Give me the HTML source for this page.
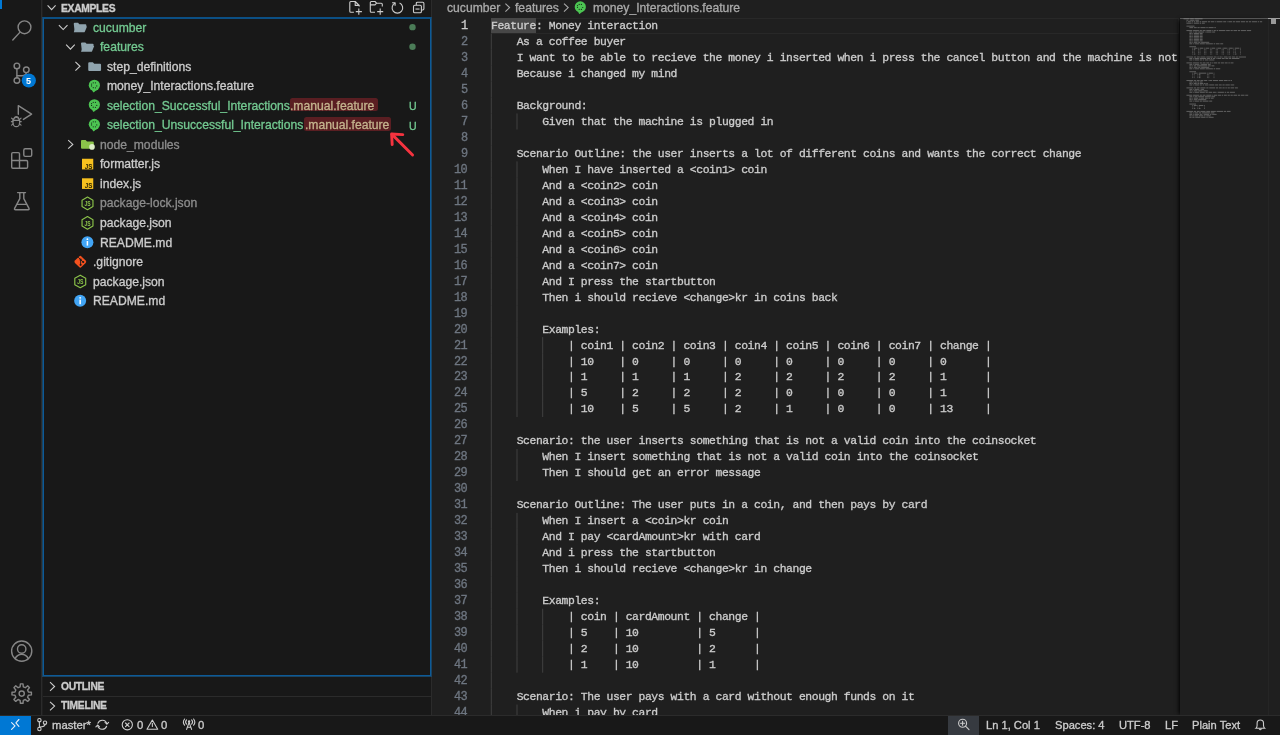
<!DOCTYPE html>
<html><head><meta charset="utf-8"><style>
html,body{margin:0;padding:0;width:1280px;height:735px;overflow:hidden;background:#1f1f1f;}
.t{position:absolute;white-space:pre;line-height:normal;-webkit-text-stroke:0.32px currentColor;will-change:transform;}
.r{position:absolute;}
.s{position:absolute;overflow:visible;}
</style></head><body>
<div class="r" style="left:0.00px;top:0.00px;width:1280.00px;height:735.00px;background:#1f1f1f;"></div><div class="r" style="left:0.00px;top:0.00px;width:42.00px;height:716.00px;background:#181818;"></div><div class="r" style="left:41.00px;top:0.00px;width:1.00px;height:716.00px;background:#2b2b2b;"></div><div class="r" style="left:43.00px;top:0.00px;width:389.00px;height:716.00px;background:#181818;"></div><div class="r" style="left:431.00px;top:0.00px;width:1.00px;height:716.00px;background:#2b2b2b;"></div><div class="r" style="left:0.00px;top:0.00px;width:2.00px;height:9.30px;background:#0078d4;"></div><svg class="s" style="left:0.00px;top:0.00px" width="42" height="716" viewBox="0 0 42 716">
<g fill="none" stroke="#868686" stroke-width="1.4" stroke-linecap="round" stroke-linejoin="round">
 <circle cx="24.5" cy="27.3" r="6.4"/>
 <line x1="19.6" y1="32.6" x2="12.8" y2="40.0"/>
 <circle cx="16.9" cy="65.9" r="2.8"/>
 <circle cx="26.3" cy="69.8" r="2.8"/>
 <circle cx="16.9" cy="80.5" r="2.8"/>
 <line x1="16.9" y1="68.7" x2="16.9" y2="77.7"/>
 <path d="M26.3 72.6 Q26.1 75.7 22.2 75.7 L17.2 75.7"/>
 <path d="M18.3 114.2 L18.3 105.6 L31.6 114.1 L23.4 119.4"/>
 <g transform="translate(16.3 121.1) scale(0.86) translate(-16.3 -121.1)">
 <path d="M12.4 121.5 A3.9 4.6 0 0 1 20.2 121.5 L20.2 123 A3.9 4.6 0 0 1 12.4 123 Z"/>
 <path d="M13.6 118.6 A2.7 2.7 0 0 1 19 118.6"/>
 <line x1="12.4" y1="120.2" x2="20.2" y2="120.2"/>
 <line x1="10.8" y1="117.6" x2="12.7" y2="119.3"/>
 <line x1="21.8" y1="117.6" x2="19.9" y2="119.3"/>
 <line x1="10.6" y1="121.8" x2="12.4" y2="121.8"/>
 <line x1="22" y1="121.8" x2="20.2" y2="121.8"/>
 <line x1="10.8" y1="125.8" x2="12.8" y2="124.3"/>
 <line x1="21.8" y1="125.8" x2="19.8" y2="124.3"/>
 </g>
 <path d="M13.2 152.6 H18.3 Q19.5 152.6 19.5 153.8 V160.5 H26.4 Q27.6 160.5 27.6 161.7 V167.1 Q27.6 168.3 26.4 168.3 H12.9 Q11.7 168.3 11.7 167.1 V153.8 Q11.7 152.6 12.9 152.6 Z"/>
 <line x1="11.7" y1="160.5" x2="19.5" y2="160.5"/>
 <line x1="19.5" y1="160.5" x2="19.5" y2="168.3"/>
 <rect x="23.8" y="148.8" width="7.9" height="7.6" rx="1.4"/>
 <line x1="17.6" y1="192.6" x2="25.5" y2="192.6"/>
 <path d="M19.8 192.6 V198.6 L14.6 208.4 Q14.1 209.7 15.5 209.7 H28.1 Q29.5 209.7 29 208.4 L23.8 198.6 V192.6"/>
 <line x1="17.4" y1="204.4" x2="26.2" y2="204.4"/>
 <circle cx="21.7" cy="651.1" r="10.1"/>
 <circle cx="21.7" cy="649.0" r="4.2"/>
 <path d="M15.0 658.6 Q17.6 654.3 21.7 654.3 Q25.8 654.3 28.4 658.6"/>
</g>
<circle cx="28.8" cy="80.5" r="7.1" fill="#0078d4"/>
<polygon points="20.09,686.89 20.40,683.89 23.00,683.89 23.31,686.89 25.31,687.72 27.65,685.81 29.49,687.65 27.58,689.99 28.41,691.99 31.41,692.30 31.41,694.90 28.41,695.21 27.58,697.21 29.49,699.55 27.65,701.39 25.31,699.48 23.31,700.31 23.00,703.31 20.40,703.31 20.09,700.31 18.09,699.48 15.75,701.39 13.91,699.55 15.82,697.21 14.99,695.21 11.99,694.90 11.99,692.30 14.99,691.99 15.82,689.99 13.91,687.65 15.75,685.81 18.09,687.72" fill="none" stroke="#868686" stroke-width="1.4" stroke-linecap="round" stroke-linejoin="round"/><circle cx="21.7" cy="693.6" r="2.6" fill="none" stroke="#868686" stroke-width="1.4" stroke-linecap="round" stroke-linejoin="round"/></svg><div class="t" style="left:26.30px;top:75.90px;font-family:'Liberation Sans',sans-serif;font-size:9.0px;color:#ffffff;font-weight:bold;-webkit-text-stroke:0;">5</div><svg class="s" style="left:44.00px;top:0.00px" width="16" height="18" viewBox="0 0 16 18"><path d="M3.6 5.4 L7.6 9.6 L11.6 5.4" fill="none" stroke="#cccccc" stroke-width="1.1"/></svg><div class="t" style="left:60.80px;top:2.60px;font-family:'Liberation Sans',sans-serif;font-size:10.3px;color:#cccccc;font-weight:bold;letter-spacing:-0.3px">EXAMPLES</div><svg class="s" style="left:0.00px;top:0.00px" width="432" height="18" viewBox="0 0 432 18"><g fill="none" stroke="#cccccc" stroke-width="1.1" stroke-linejoin="round">
 <path d="M353.9 12.3 H350.8 Q349.8 12.3 349.8 11.3 V2.5 Q349.8 1.5 350.8 1.5 H355.2 L359.2 5.5 V6.6 M355.2 1.8 V5.4 H359"/>
 <path d="M358.8 8.6 V14.7 M355.8 11.6 H361.9"/>
 <path d="M375 12.3 H371.3 Q370.3 12.3 370.3 11.3 V2.5 Q370.3 1.5 371.3 1.5 H375 L376.6 3.2 H381.3 Q382.3 3.2 382.3 4.2 V6.6 M370.3 4.9 H375 L376.6 3.2"/>
 <path d="M380.2 8.6 V14.7 M377.2 11.6 H383.2"/>
 <path d="M399.56 2.96 A5.3 5.3 0 1 1 395.24 2.96"/>
 <path d="M392.1 2.7 L395.1 2.7 L395.1 5.7"/>
 <rect x="413.5" y="5.2" width="7.9" height="7.6" rx="1.3"/>
 <path d="M416.3 5.2 V3.4 Q416.3 2.2 417.5 2.2 H422.7 Q423.9 2.2 423.9 3.4 V8.8 Q423.9 10 422.7 10 H421.4"/>
 <line x1="415.5" y1="9.05" x2="419.5" y2="9.05"/>
</g></svg><div class="r" style="left:42px;top:17px;width:390px;height:660px;border:1px solid #1b4462;border-top-color:#0b4f84;box-sizing:border-box"></div><div class="r" style="left:43px;top:18px;width:388px;height:658px;border:1px solid #0c5a98;border-top-color:#0b4f84;box-sizing:border-box"></div><div class="t" style="left:92.75px;top:20.60px;font-family:'Liberation Sans',sans-serif;font-size:12.15px;color:#73c991;font-weight:normal;">cucumber</div><div class="t" style="left:100.00px;top:40.14px;font-family:'Liberation Sans',sans-serif;font-size:12.15px;color:#73c991;font-weight:normal;">features</div><div class="t" style="left:107.25px;top:59.68px;font-family:'Liberation Sans',sans-serif;font-size:12.15px;color:#cccccc;font-weight:normal;">step_definitions</div><div class="t" style="left:107.25px;top:79.22px;font-family:'Liberation Sans',sans-serif;font-size:12.15px;color:#cccccc;font-weight:normal;">money_Interactions.feature</div><div class="t" style="left:107.25px;top:98.76px;font-family:'Liberation Sans',sans-serif;font-size:12.15px;color:#73c991;font-weight:normal;">selection_Successful_Interactions</div><div class="r" style="left:290.00px;top:97.86px;width:88.10px;height:13.40px;background:#5a1e22;border-radius:2.5px"></div><div class="t" style="left:290.20px;top:98.76px;font-family:'Liberation Sans',sans-serif;font-size:12.15px;color:#c4b48e;font-weight:normal;">.manual.feature</div><div class="t" style="left:409.30px;top:99.96px;font-family:'Liberation Sans',sans-serif;font-size:10.6px;color:#73c991;font-weight:normal;">U</div><div class="t" style="left:107.25px;top:118.30px;font-family:'Liberation Sans',sans-serif;font-size:12.15px;color:#73c991;font-weight:normal;">selection_Unsuccessful_Interactions</div><div class="r" style="left:304.40px;top:117.40px;width:86.85px;height:13.40px;background:#5a1e22;border-radius:2.5px"></div><div class="t" style="left:304.60px;top:118.30px;font-family:'Liberation Sans',sans-serif;font-size:12.15px;color:#c4b48e;font-weight:normal;">.manual.feature</div><div class="t" style="left:409.30px;top:119.50px;font-family:'Liberation Sans',sans-serif;font-size:10.6px;color:#73c991;font-weight:normal;">U</div><div class="t" style="left:100.00px;top:137.84px;font-family:'Liberation Sans',sans-serif;font-size:12.15px;color:#8c8c8c;font-weight:normal;">node_modules</div><div class="t" style="left:100.00px;top:157.38px;font-family:'Liberation Sans',sans-serif;font-size:12.15px;color:#cccccc;font-weight:normal;">formatter.js</div><div class="t" style="left:100.00px;top:176.92px;font-family:'Liberation Sans',sans-serif;font-size:12.15px;color:#cccccc;font-weight:normal;">index.js</div><div class="t" style="left:100.00px;top:196.46px;font-family:'Liberation Sans',sans-serif;font-size:12.15px;color:#8c8c8c;font-weight:normal;">package-lock.json</div><div class="t" style="left:100.00px;top:216.00px;font-family:'Liberation Sans',sans-serif;font-size:12.15px;color:#cccccc;font-weight:normal;">package.json</div><div class="t" style="left:100.00px;top:235.54px;font-family:'Liberation Sans',sans-serif;font-size:12.15px;color:#cccccc;font-weight:normal;">README.md</div><div class="t" style="left:92.75px;top:255.08px;font-family:'Liberation Sans',sans-serif;font-size:12.15px;color:#cccccc;font-weight:normal;">.gitignore</div><div class="t" style="left:92.75px;top:274.62px;font-family:'Liberation Sans',sans-serif;font-size:12.15px;color:#cccccc;font-weight:normal;">package.json</div><div class="t" style="left:92.75px;top:294.16px;font-family:'Liberation Sans',sans-serif;font-size:12.15px;color:#cccccc;font-weight:normal;">README.md</div><svg class="s" style="left:0.00px;top:0.00px" width="432" height="716" viewBox="0 0 432 716"><path d="M58.90 25.07 l4.3 4.5 l4.3 -4.5" fill="none" stroke="#cccccc" stroke-width="1.1"/><path d="M73.75 23.869999999999997 q0 -1 1 -1 h3.3 l1.3 1.3 h6 q1 0 1 1 v1.9 h-9.9 l-1.7 5.4 z" fill="#90a4ae"/>
<path d="M76.05 26.569999999999997 h10.9 l-2.1 5.1 q-0.3 0.6 -1 0.6 h-10.1 z" fill="#90a4ae"/><circle cx="412.5" cy="27.17" r="3.2" fill="#4b7c57"/><path d="M66.15 44.61 l4.3 4.5 l4.3 -4.5" fill="none" stroke="#cccccc" stroke-width="1.1"/><path d="M81.0 43.410000000000004 q0 -1 1 -1 h3.3 l1.3 1.3 h6 q1 0 1 1 v1.9 h-9.9 l-1.7 5.4 z" fill="#90a4ae"/>
<path d="M83.3 46.11000000000001 h10.9 l-2.1 5.1 q-0.3 0.6 -1 0.6 h-10.1 z" fill="#90a4ae"/><circle cx="412.5" cy="46.71" r="3.2" fill="#4b7c57"/><path d="M75.40 61.95 l4.6 4.3 l-4.6 4.3" fill="none" stroke="#cccccc" stroke-width="1.1"/><path d="M88.25 63.14999999999999 q0 -1 1 -1 h3.6 l1.4 1.5 h5.8 q1 0 1 1 v5.3 q0 1 -1 1 h-10.8 q-1 0 -1 -1 z" fill="#90a4ae"/><circle cx="94.35" cy="85.29" r="5.6" fill="#4cc452"/><path d="M91.75 89.49000000000001 L93.14999999999999 92.19000000000001 Q93.75 92.49000000000001 94.55 91.69000000000001 L96.14999999999999 90.19000000000001 Z" fill="#4cc452"/><circle cx="93.25" cy="82.79" r="0.62" fill="#17301a"/><circle cx="95.45" cy="82.79" r="0.62" fill="#17301a"/><circle cx="91.55" cy="84.04" r="0.62" fill="#17301a"/><circle cx="91.55" cy="85.89" r="0.62" fill="#17301a"/><circle cx="93.25" cy="87.69" r="0.62" fill="#17301a"/><circle cx="95.45" cy="87.79" r="0.62" fill="#17301a"/><circle cx="96.75" cy="85.89" r="0.62" fill="#17301a"/><circle cx="94.35" cy="104.83" r="5.6" fill="#4cc452"/><path d="M91.75 109.03 L93.14999999999999 111.73 Q93.75 112.03 94.55 111.23 L96.14999999999999 109.73 Z" fill="#4cc452"/><circle cx="93.25" cy="102.33" r="0.62" fill="#17301a"/><circle cx="95.45" cy="102.33" r="0.62" fill="#17301a"/><circle cx="91.55" cy="103.58" r="0.62" fill="#17301a"/><circle cx="91.55" cy="105.43" r="0.62" fill="#17301a"/><circle cx="93.25" cy="107.23" r="0.62" fill="#17301a"/><circle cx="95.45" cy="107.33" r="0.62" fill="#17301a"/><circle cx="96.75" cy="105.43" r="0.62" fill="#17301a"/><circle cx="94.35" cy="124.36999999999999" r="5.6" fill="#4cc452"/><path d="M91.75 128.57 L93.14999999999999 131.26999999999998 Q93.75 131.57 94.55 130.76999999999998 L96.14999999999999 129.26999999999998 Z" fill="#4cc452"/><circle cx="93.25" cy="121.87" r="0.62" fill="#17301a"/><circle cx="95.45" cy="121.87" r="0.62" fill="#17301a"/><circle cx="91.55" cy="123.12" r="0.62" fill="#17301a"/><circle cx="91.55" cy="124.97" r="0.62" fill="#17301a"/><circle cx="93.25" cy="126.77" r="0.62" fill="#17301a"/><circle cx="95.45" cy="126.87" r="0.62" fill="#17301a"/><circle cx="96.75" cy="124.97" r="0.62" fill="#17301a"/><path d="M68.20 140.11 l4.6 4.3 l-4.6 4.3" fill="none" stroke="#cccccc" stroke-width="1.1"/><path d="M81.0 140.91000000000003 q0 -1 1 -1 h3.6 l1.4 1.5 h5.8 q1 0 1 1 v5.3 q0 1 -1 1 h-10.8 q-1 0 -1 -1 z" fill="#8bc34a"/><circle cx="92.0" cy="146.91000000000003" r="2.8" fill="#dcedc8"/><rect x="82.0" y="158.75" width="11.25" height="10.65" fill="#f7c11f"/><text x="84.7" y="168.75" textLength="7.6" lengthAdjust="spacingAndGlyphs" font-family="Liberation Sans" font-weight="bold" font-size="7.4" fill="#2a2300">JS</text><rect x="82.0" y="178.29" width="11.25" height="10.65" fill="#f7c11f"/><text x="84.7" y="188.29" textLength="7.6" lengthAdjust="spacingAndGlyphs" font-family="Liberation Sans" font-weight="bold" font-size="7.4" fill="#2a2300">JS</text><polygon points="87.50,197.03 92.96,200.18 92.96,206.48 87.50,209.63 82.04,206.48 82.04,200.18" fill="none" stroke="#8bc34a" stroke-width="1.15" stroke-linejoin="round"/><text x="84.4" y="206.23" textLength="6.2" lengthAdjust="spacingAndGlyphs" font-family="Liberation Sans" font-weight="bold" font-size="7.2" fill="#8bc34a">JS</text><polygon points="87.50,216.57 92.96,219.72 92.96,226.02 87.50,229.17 82.04,226.02 82.04,219.72" fill="none" stroke="#8bc34a" stroke-width="1.15" stroke-linejoin="round"/><text x="84.4" y="225.76999999999998" textLength="6.2" lengthAdjust="spacingAndGlyphs" font-family="Liberation Sans" font-weight="bold" font-size="7.2" fill="#8bc34a">JS</text><circle cx="87.4" cy="242.21" r="6" fill="#42a5f5"/><rect x="86.65" y="241.01000000000002" width="1.5" height="4.6" fill="#ffffff"/><circle cx="87.4" cy="239.21" r="0.9" fill="#ffffff"/><rect x="75.7" y="257.15" width="9.2" height="9.2" rx="1.6" transform="rotate(45 80.3 261.75)" fill="#f4511e"/><path d="M78.2 257.15 L80.6 259.65 V264.85 M80.6 259.65 L83.2 262.05" stroke="#1b1b1b" stroke-width="0.9" fill="none"/><circle cx="80.6" cy="259.65" r="1.05" fill="#1b1b1b"/><circle cx="80.6" cy="264.85" r="1.05" fill="#1b1b1b"/><circle cx="83.2" cy="262.05" r="1.05" fill="#1b1b1b"/><polygon points="80.25,275.19 85.71,278.34 85.71,284.64 80.25,287.79 74.79,284.64 74.79,278.34" fill="none" stroke="#8bc34a" stroke-width="1.15" stroke-linejoin="round"/><text x="77.15" y="284.38999999999993" textLength="6.2" lengthAdjust="spacingAndGlyphs" font-family="Liberation Sans" font-weight="bold" font-size="7.2" fill="#8bc34a">JS</text><circle cx="80.15" cy="300.83" r="6" fill="#42a5f5"/><rect x="79.4" y="299.63" width="1.5" height="4.6" fill="#ffffff"/><circle cx="80.15" cy="297.83" r="0.9" fill="#ffffff"/></svg><svg class="s" style="left:380.00px;top:125.80px" width="40" height="35" viewBox="0 0 40 35"><g stroke="#f5333f" stroke-width="2.9" fill="none" stroke-linecap="round" stroke-linejoin="round"><path d="M32.6 29 L12.0 8.4"/><path d="M22.8 8.6 L11.6 8.0 L12.2 18.6"/></g></svg><div class="r" style="left:43.00px;top:695.90px;width:388.70px;height:0.90px;background:#2b2b2b;"></div><svg class="s" style="left:44.00px;top:676.00px" width="20" height="40" viewBox="0 0 20 40"><path d="M6.00 6.20 l4.6 4.3 l-4.6 4.3" fill="none" stroke="#cccccc" stroke-width="1.1"/><path d="M6.00 25.80 l4.6 4.3 l-4.6 4.3" fill="none" stroke="#cccccc" stroke-width="1.1"/></svg><div class="t" style="left:61.00px;top:680.60px;font-family:'Liberation Sans',sans-serif;font-size:10.3px;color:#cccccc;font-weight:bold;letter-spacing:-0.3px">OUTLINE</div><div class="t" style="left:61.00px;top:700.10px;font-family:'Liberation Sans',sans-serif;font-size:10.3px;color:#cccccc;font-weight:bold;letter-spacing:-0.3px">TIMELINE</div><div class="r" style="left:490.65px;top:17.60px;width:688.85px;height:15.98px;border:1.4px solid #282828;box-sizing:border-box"></div><div class="r" style="left:491.25px;top:18.10px;width:44.94px;height:14.98px;background:#474747;"></div><svg class="s" style="left:0.00px;top:0.00px" width="1180" height="716" viewBox="0 0 1180 716"><rect x="490.80" y="33.58" width="1" height="16.03" fill="#404040"/><rect x="490.80" y="49.55" width="1" height="16.03" fill="#404040"/><rect x="490.80" y="65.53" width="1" height="16.03" fill="#404040"/><rect x="490.80" y="81.50" width="1" height="16.03" fill="#404040"/><rect x="490.80" y="97.48" width="1" height="16.03" fill="#404040"/><rect x="490.80" y="113.46" width="1" height="16.03" fill="#404040"/><rect x="516.48" y="113.46" width="1" height="16.03" fill="#404040"/><rect x="490.80" y="129.43" width="1" height="16.03" fill="#404040"/><rect x="490.80" y="145.41" width="1" height="16.03" fill="#404040"/><rect x="490.80" y="161.38" width="1" height="16.03" fill="#404040"/><rect x="516.48" y="161.38" width="1" height="16.03" fill="#404040"/><rect x="490.80" y="177.36" width="1" height="16.03" fill="#404040"/><rect x="516.48" y="177.36" width="1" height="16.03" fill="#404040"/><rect x="490.80" y="193.34" width="1" height="16.03" fill="#404040"/><rect x="516.48" y="193.34" width="1" height="16.03" fill="#404040"/><rect x="490.80" y="209.31" width="1" height="16.03" fill="#404040"/><rect x="516.48" y="209.31" width="1" height="16.03" fill="#404040"/><rect x="490.80" y="225.29" width="1" height="16.03" fill="#404040"/><rect x="516.48" y="225.29" width="1" height="16.03" fill="#404040"/><rect x="490.80" y="241.26" width="1" height="16.03" fill="#404040"/><rect x="516.48" y="241.26" width="1" height="16.03" fill="#404040"/><rect x="490.80" y="257.24" width="1" height="16.03" fill="#404040"/><rect x="516.48" y="257.24" width="1" height="16.03" fill="#404040"/><rect x="490.80" y="273.22" width="1" height="16.03" fill="#404040"/><rect x="516.48" y="273.22" width="1" height="16.03" fill="#404040"/><rect x="490.80" y="289.19" width="1" height="16.03" fill="#404040"/><rect x="516.48" y="289.19" width="1" height="16.03" fill="#404040"/><rect x="490.80" y="305.17" width="1" height="16.03" fill="#404040"/><rect x="516.48" y="305.17" width="1" height="16.03" fill="#404040"/><rect x="490.80" y="321.14" width="1" height="16.03" fill="#404040"/><rect x="516.48" y="321.14" width="1" height="16.03" fill="#404040"/><rect x="490.80" y="337.12" width="1" height="16.03" fill="#404040"/><rect x="516.48" y="337.12" width="1" height="16.03" fill="#404040"/><rect x="542.16" y="337.12" width="1" height="16.03" fill="#404040"/><rect x="490.80" y="353.10" width="1" height="16.03" fill="#404040"/><rect x="516.48" y="353.10" width="1" height="16.03" fill="#404040"/><rect x="542.16" y="353.10" width="1" height="16.03" fill="#404040"/><rect x="490.80" y="369.07" width="1" height="16.03" fill="#404040"/><rect x="516.48" y="369.07" width="1" height="16.03" fill="#404040"/><rect x="542.16" y="369.07" width="1" height="16.03" fill="#404040"/><rect x="490.80" y="385.05" width="1" height="16.03" fill="#404040"/><rect x="516.48" y="385.05" width="1" height="16.03" fill="#404040"/><rect x="542.16" y="385.05" width="1" height="16.03" fill="#404040"/><rect x="490.80" y="401.02" width="1" height="16.03" fill="#404040"/><rect x="516.48" y="401.02" width="1" height="16.03" fill="#404040"/><rect x="542.16" y="401.02" width="1" height="16.03" fill="#404040"/><rect x="490.80" y="417.00" width="1" height="16.03" fill="#404040"/><rect x="490.80" y="432.98" width="1" height="16.03" fill="#404040"/><rect x="490.80" y="448.95" width="1" height="16.03" fill="#404040"/><rect x="516.48" y="448.95" width="1" height="16.03" fill="#404040"/><rect x="490.80" y="464.93" width="1" height="16.03" fill="#404040"/><rect x="516.48" y="464.93" width="1" height="16.03" fill="#404040"/><rect x="490.80" y="480.90" width="1" height="16.03" fill="#404040"/><rect x="490.80" y="496.88" width="1" height="16.03" fill="#404040"/><rect x="490.80" y="512.86" width="1" height="16.03" fill="#404040"/><rect x="516.48" y="512.86" width="1" height="16.03" fill="#404040"/><rect x="490.80" y="528.83" width="1" height="16.03" fill="#404040"/><rect x="516.48" y="528.83" width="1" height="16.03" fill="#404040"/><rect x="490.80" y="544.81" width="1" height="16.03" fill="#404040"/><rect x="516.48" y="544.81" width="1" height="16.03" fill="#404040"/><rect x="490.80" y="560.78" width="1" height="16.03" fill="#404040"/><rect x="516.48" y="560.78" width="1" height="16.03" fill="#404040"/><rect x="490.80" y="576.76" width="1" height="16.03" fill="#404040"/><rect x="516.48" y="576.76" width="1" height="16.03" fill="#404040"/><rect x="490.80" y="592.74" width="1" height="16.03" fill="#404040"/><rect x="516.48" y="592.74" width="1" height="16.03" fill="#404040"/><rect x="490.80" y="608.71" width="1" height="16.03" fill="#404040"/><rect x="516.48" y="608.71" width="1" height="16.03" fill="#404040"/><rect x="542.16" y="608.71" width="1" height="16.03" fill="#404040"/><rect x="490.80" y="624.69" width="1" height="16.03" fill="#404040"/><rect x="516.48" y="624.69" width="1" height="16.03" fill="#404040"/><rect x="542.16" y="624.69" width="1" height="16.03" fill="#404040"/><rect x="490.80" y="640.66" width="1" height="16.03" fill="#404040"/><rect x="516.48" y="640.66" width="1" height="16.03" fill="#404040"/><rect x="542.16" y="640.66" width="1" height="16.03" fill="#404040"/><rect x="490.80" y="656.64" width="1" height="16.03" fill="#404040"/><rect x="516.48" y="656.64" width="1" height="16.03" fill="#404040"/><rect x="542.16" y="656.64" width="1" height="16.03" fill="#404040"/><rect x="490.80" y="672.62" width="1" height="16.03" fill="#404040"/><rect x="490.80" y="688.59" width="1" height="16.03" fill="#404040"/><rect x="490.80" y="704.57" width="1" height="16.03" fill="#404040"/><rect x="516.48" y="704.57" width="1" height="16.03" fill="#404040"/></svg><div class="t" style="left:460.78px;top:19.00px;font-family:'Liberation Mono',monospace;font-size:11.9px;color:#cccccc;font-weight:normal;letter-spacing:-0.721px;">1</div><div class="t" style="left:491.25px;top:20.00px;font-family:'Liberation Mono',monospace;font-size:11.4px;color:#cccccc;font-weight:normal;letter-spacing:-0.421px;">Feature: Money interaction</div><div class="t" style="left:460.78px;top:34.98px;font-family:'Liberation Mono',monospace;font-size:11.9px;color:#6e7681;font-weight:normal;letter-spacing:-0.721px;">2</div><div class="t" style="left:491.25px;top:35.98px;font-family:'Liberation Mono',monospace;font-size:11.4px;color:#cccccc;font-weight:normal;letter-spacing:-0.421px;">    As a coffee buyer</div><div class="t" style="left:460.78px;top:50.95px;font-family:'Liberation Mono',monospace;font-size:11.9px;color:#6e7681;font-weight:normal;letter-spacing:-0.721px;">3</div><div class="t" style="left:491.25px;top:51.95px;font-family:'Liberation Mono',monospace;font-size:11.4px;color:#cccccc;font-weight:normal;letter-spacing:-0.421px;">    I want to be able to recieve the money i inserted when i press the cancel button and the machine is not</div><div class="t" style="left:460.78px;top:66.93px;font-family:'Liberation Mono',monospace;font-size:11.9px;color:#6e7681;font-weight:normal;letter-spacing:-0.721px;">4</div><div class="t" style="left:491.25px;top:67.93px;font-family:'Liberation Mono',monospace;font-size:11.4px;color:#cccccc;font-weight:normal;letter-spacing:-0.421px;">    Because i changed my mind</div><div class="t" style="left:460.78px;top:82.90px;font-family:'Liberation Mono',monospace;font-size:11.9px;color:#6e7681;font-weight:normal;letter-spacing:-0.721px;">5</div><div class="t" style="left:460.78px;top:98.88px;font-family:'Liberation Mono',monospace;font-size:11.9px;color:#6e7681;font-weight:normal;letter-spacing:-0.721px;">6</div><div class="t" style="left:491.25px;top:99.88px;font-family:'Liberation Mono',monospace;font-size:11.4px;color:#cccccc;font-weight:normal;letter-spacing:-0.421px;">    Background:</div><div class="t" style="left:460.78px;top:114.86px;font-family:'Liberation Mono',monospace;font-size:11.9px;color:#6e7681;font-weight:normal;letter-spacing:-0.721px;">7</div><div class="t" style="left:491.25px;top:115.86px;font-family:'Liberation Mono',monospace;font-size:11.4px;color:#cccccc;font-weight:normal;letter-spacing:-0.421px;">        Given that the machine is plugged in</div><div class="t" style="left:460.78px;top:130.83px;font-family:'Liberation Mono',monospace;font-size:11.9px;color:#6e7681;font-weight:normal;letter-spacing:-0.721px;">8</div><div class="t" style="left:460.78px;top:146.81px;font-family:'Liberation Mono',monospace;font-size:11.9px;color:#6e7681;font-weight:normal;letter-spacing:-0.721px;">9</div><div class="t" style="left:491.25px;top:147.81px;font-family:'Liberation Mono',monospace;font-size:11.4px;color:#cccccc;font-weight:normal;letter-spacing:-0.421px;">    Scenario Outline: the user inserts a lot of different coins and wants the correct change</div><div class="t" style="left:454.36px;top:162.78px;font-family:'Liberation Mono',monospace;font-size:11.9px;color:#6e7681;font-weight:normal;letter-spacing:-0.721px;">10</div><div class="t" style="left:491.25px;top:163.78px;font-family:'Liberation Mono',monospace;font-size:11.4px;color:#cccccc;font-weight:normal;letter-spacing:-0.421px;">        When I have inserted a &lt;coin1&gt; coin</div><div class="t" style="left:454.36px;top:178.76px;font-family:'Liberation Mono',monospace;font-size:11.9px;color:#6e7681;font-weight:normal;letter-spacing:-0.721px;">11</div><div class="t" style="left:491.25px;top:179.76px;font-family:'Liberation Mono',monospace;font-size:11.4px;color:#cccccc;font-weight:normal;letter-spacing:-0.421px;">        And a &lt;coin2&gt; coin</div><div class="t" style="left:454.36px;top:194.74px;font-family:'Liberation Mono',monospace;font-size:11.9px;color:#6e7681;font-weight:normal;letter-spacing:-0.721px;">12</div><div class="t" style="left:491.25px;top:195.74px;font-family:'Liberation Mono',monospace;font-size:11.4px;color:#cccccc;font-weight:normal;letter-spacing:-0.421px;">        And a &lt;coin3&gt; coin</div><div class="t" style="left:454.36px;top:210.71px;font-family:'Liberation Mono',monospace;font-size:11.9px;color:#6e7681;font-weight:normal;letter-spacing:-0.721px;">13</div><div class="t" style="left:491.25px;top:211.71px;font-family:'Liberation Mono',monospace;font-size:11.4px;color:#cccccc;font-weight:normal;letter-spacing:-0.421px;">        And a &lt;coin4&gt; coin</div><div class="t" style="left:454.36px;top:226.69px;font-family:'Liberation Mono',monospace;font-size:11.9px;color:#6e7681;font-weight:normal;letter-spacing:-0.721px;">14</div><div class="t" style="left:491.25px;top:227.69px;font-family:'Liberation Mono',monospace;font-size:11.4px;color:#cccccc;font-weight:normal;letter-spacing:-0.421px;">        And a &lt;coin5&gt; coin</div><div class="t" style="left:454.36px;top:242.66px;font-family:'Liberation Mono',monospace;font-size:11.9px;color:#6e7681;font-weight:normal;letter-spacing:-0.721px;">15</div><div class="t" style="left:491.25px;top:243.66px;font-family:'Liberation Mono',monospace;font-size:11.4px;color:#cccccc;font-weight:normal;letter-spacing:-0.421px;">        And a &lt;coin6&gt; coin</div><div class="t" style="left:454.36px;top:258.64px;font-family:'Liberation Mono',monospace;font-size:11.9px;color:#6e7681;font-weight:normal;letter-spacing:-0.721px;">16</div><div class="t" style="left:491.25px;top:259.64px;font-family:'Liberation Mono',monospace;font-size:11.4px;color:#cccccc;font-weight:normal;letter-spacing:-0.421px;">        And a &lt;coin7&gt; coin</div><div class="t" style="left:454.36px;top:274.62px;font-family:'Liberation Mono',monospace;font-size:11.9px;color:#6e7681;font-weight:normal;letter-spacing:-0.721px;">17</div><div class="t" style="left:491.25px;top:275.62px;font-family:'Liberation Mono',monospace;font-size:11.4px;color:#cccccc;font-weight:normal;letter-spacing:-0.421px;">        And I press the startbutton</div><div class="t" style="left:454.36px;top:290.59px;font-family:'Liberation Mono',monospace;font-size:11.9px;color:#6e7681;font-weight:normal;letter-spacing:-0.721px;">18</div><div class="t" style="left:491.25px;top:291.59px;font-family:'Liberation Mono',monospace;font-size:11.4px;color:#cccccc;font-weight:normal;letter-spacing:-0.421px;">        Then i should recieve &lt;change&gt;kr in coins back</div><div class="t" style="left:454.36px;top:306.57px;font-family:'Liberation Mono',monospace;font-size:11.9px;color:#6e7681;font-weight:normal;letter-spacing:-0.721px;">19</div><div class="t" style="left:454.36px;top:322.54px;font-family:'Liberation Mono',monospace;font-size:11.9px;color:#6e7681;font-weight:normal;letter-spacing:-0.721px;">20</div><div class="t" style="left:491.25px;top:323.54px;font-family:'Liberation Mono',monospace;font-size:11.4px;color:#cccccc;font-weight:normal;letter-spacing:-0.421px;">        Examples:</div><div class="t" style="left:454.36px;top:338.52px;font-family:'Liberation Mono',monospace;font-size:11.9px;color:#6e7681;font-weight:normal;letter-spacing:-0.721px;">21</div><div class="t" style="left:491.25px;top:339.52px;font-family:'Liberation Mono',monospace;font-size:11.4px;color:#cccccc;font-weight:normal;letter-spacing:-0.421px;">            | coin1 | coin2 | coin3 | coin4 | coin5 | coin6 | coin7 | change |</div><div class="t" style="left:454.36px;top:354.50px;font-family:'Liberation Mono',monospace;font-size:11.9px;color:#6e7681;font-weight:normal;letter-spacing:-0.721px;">22</div><div class="t" style="left:491.25px;top:355.50px;font-family:'Liberation Mono',monospace;font-size:11.4px;color:#cccccc;font-weight:normal;letter-spacing:-0.421px;">            | 10    | 0     | 0     | 0     | 0     | 0     | 0     | 0      |</div><div class="t" style="left:454.36px;top:370.47px;font-family:'Liberation Mono',monospace;font-size:11.9px;color:#6e7681;font-weight:normal;letter-spacing:-0.721px;">23</div><div class="t" style="left:491.25px;top:371.47px;font-family:'Liberation Mono',monospace;font-size:11.4px;color:#cccccc;font-weight:normal;letter-spacing:-0.421px;">            | 1     | 1     | 1     | 2     | 2     | 2     | 2     | 1      |</div><div class="t" style="left:454.36px;top:386.45px;font-family:'Liberation Mono',monospace;font-size:11.9px;color:#6e7681;font-weight:normal;letter-spacing:-0.721px;">24</div><div class="t" style="left:491.25px;top:387.45px;font-family:'Liberation Mono',monospace;font-size:11.4px;color:#cccccc;font-weight:normal;letter-spacing:-0.421px;">            | 5     | 2     | 2     | 2     | 0     | 0     | 0     | 1      |</div><div class="t" style="left:454.36px;top:402.42px;font-family:'Liberation Mono',monospace;font-size:11.9px;color:#6e7681;font-weight:normal;letter-spacing:-0.721px;">25</div><div class="t" style="left:491.25px;top:403.42px;font-family:'Liberation Mono',monospace;font-size:11.4px;color:#cccccc;font-weight:normal;letter-spacing:-0.421px;">            | 10    | 5     | 5     | 2     | 1     | 0     | 0     | 13     |</div><div class="t" style="left:454.36px;top:418.40px;font-family:'Liberation Mono',monospace;font-size:11.9px;color:#6e7681;font-weight:normal;letter-spacing:-0.721px;">26</div><div class="t" style="left:454.36px;top:434.38px;font-family:'Liberation Mono',monospace;font-size:11.9px;color:#6e7681;font-weight:normal;letter-spacing:-0.721px;">27</div><div class="t" style="left:491.25px;top:435.38px;font-family:'Liberation Mono',monospace;font-size:11.4px;color:#cccccc;font-weight:normal;letter-spacing:-0.421px;">    Scenario: the user inserts something that is not a valid coin into the coinsocket</div><div class="t" style="left:454.36px;top:450.35px;font-family:'Liberation Mono',monospace;font-size:11.9px;color:#6e7681;font-weight:normal;letter-spacing:-0.721px;">28</div><div class="t" style="left:491.25px;top:451.35px;font-family:'Liberation Mono',monospace;font-size:11.4px;color:#cccccc;font-weight:normal;letter-spacing:-0.421px;">        When I insert something that is not a valid coin into the coinsocket</div><div class="t" style="left:454.36px;top:466.33px;font-family:'Liberation Mono',monospace;font-size:11.9px;color:#6e7681;font-weight:normal;letter-spacing:-0.721px;">29</div><div class="t" style="left:491.25px;top:467.33px;font-family:'Liberation Mono',monospace;font-size:11.4px;color:#cccccc;font-weight:normal;letter-spacing:-0.421px;">        Then I should get an error message</div><div class="t" style="left:454.36px;top:482.30px;font-family:'Liberation Mono',monospace;font-size:11.9px;color:#6e7681;font-weight:normal;letter-spacing:-0.721px;">30</div><div class="t" style="left:454.36px;top:498.28px;font-family:'Liberation Mono',monospace;font-size:11.9px;color:#6e7681;font-weight:normal;letter-spacing:-0.721px;">31</div><div class="t" style="left:491.25px;top:499.28px;font-family:'Liberation Mono',monospace;font-size:11.4px;color:#cccccc;font-weight:normal;letter-spacing:-0.421px;">    Scenario Outline: The user puts in a coin, and then pays by card</div><div class="t" style="left:454.36px;top:514.26px;font-family:'Liberation Mono',monospace;font-size:11.9px;color:#6e7681;font-weight:normal;letter-spacing:-0.721px;">32</div><div class="t" style="left:491.25px;top:515.26px;font-family:'Liberation Mono',monospace;font-size:11.4px;color:#cccccc;font-weight:normal;letter-spacing:-0.421px;">        When I insert a &lt;coin&gt;kr coin</div><div class="t" style="left:454.36px;top:530.23px;font-family:'Liberation Mono',monospace;font-size:11.9px;color:#6e7681;font-weight:normal;letter-spacing:-0.721px;">33</div><div class="t" style="left:491.25px;top:531.23px;font-family:'Liberation Mono',monospace;font-size:11.4px;color:#cccccc;font-weight:normal;letter-spacing:-0.421px;">        And I pay &lt;cardAmount&gt;kr with card</div><div class="t" style="left:454.36px;top:546.21px;font-family:'Liberation Mono',monospace;font-size:11.9px;color:#6e7681;font-weight:normal;letter-spacing:-0.721px;">34</div><div class="t" style="left:491.25px;top:547.21px;font-family:'Liberation Mono',monospace;font-size:11.4px;color:#cccccc;font-weight:normal;letter-spacing:-0.421px;">        And i press the startbutton</div><div class="t" style="left:454.36px;top:562.18px;font-family:'Liberation Mono',monospace;font-size:11.9px;color:#6e7681;font-weight:normal;letter-spacing:-0.721px;">35</div><div class="t" style="left:491.25px;top:563.18px;font-family:'Liberation Mono',monospace;font-size:11.4px;color:#cccccc;font-weight:normal;letter-spacing:-0.421px;">        Then i should recieve &lt;change&gt;kr in change</div><div class="t" style="left:454.36px;top:578.16px;font-family:'Liberation Mono',monospace;font-size:11.9px;color:#6e7681;font-weight:normal;letter-spacing:-0.721px;">36</div><div class="t" style="left:454.36px;top:594.14px;font-family:'Liberation Mono',monospace;font-size:11.9px;color:#6e7681;font-weight:normal;letter-spacing:-0.721px;">37</div><div class="t" style="left:491.25px;top:595.14px;font-family:'Liberation Mono',monospace;font-size:11.4px;color:#cccccc;font-weight:normal;letter-spacing:-0.421px;">        Examples:</div><div class="t" style="left:454.36px;top:610.11px;font-family:'Liberation Mono',monospace;font-size:11.9px;color:#6e7681;font-weight:normal;letter-spacing:-0.721px;">38</div><div class="t" style="left:491.25px;top:611.11px;font-family:'Liberation Mono',monospace;font-size:11.4px;color:#cccccc;font-weight:normal;letter-spacing:-0.421px;">            | coin | cardAmount | change |</div><div class="t" style="left:454.36px;top:626.09px;font-family:'Liberation Mono',monospace;font-size:11.9px;color:#6e7681;font-weight:normal;letter-spacing:-0.721px;">39</div><div class="t" style="left:491.25px;top:627.09px;font-family:'Liberation Mono',monospace;font-size:11.4px;color:#cccccc;font-weight:normal;letter-spacing:-0.421px;">            | 5    | 10         | 5      |</div><div class="t" style="left:454.36px;top:642.06px;font-family:'Liberation Mono',monospace;font-size:11.9px;color:#6e7681;font-weight:normal;letter-spacing:-0.721px;">40</div><div class="t" style="left:491.25px;top:643.06px;font-family:'Liberation Mono',monospace;font-size:11.4px;color:#cccccc;font-weight:normal;letter-spacing:-0.421px;">            | 2    | 10         | 2      |</div><div class="t" style="left:454.36px;top:658.04px;font-family:'Liberation Mono',monospace;font-size:11.9px;color:#6e7681;font-weight:normal;letter-spacing:-0.721px;">41</div><div class="t" style="left:491.25px;top:659.04px;font-family:'Liberation Mono',monospace;font-size:11.4px;color:#cccccc;font-weight:normal;letter-spacing:-0.421px;">            | 1    | 10         | 1      |</div><div class="t" style="left:454.36px;top:674.02px;font-family:'Liberation Mono',monospace;font-size:11.9px;color:#6e7681;font-weight:normal;letter-spacing:-0.721px;">42</div><div class="t" style="left:454.36px;top:689.99px;font-family:'Liberation Mono',monospace;font-size:11.9px;color:#6e7681;font-weight:normal;letter-spacing:-0.721px;">43</div><div class="t" style="left:491.25px;top:690.99px;font-family:'Liberation Mono',monospace;font-size:11.4px;color:#cccccc;font-weight:normal;letter-spacing:-0.421px;">    Scenario: The user pays with a card without enough funds on it</div><div class="t" style="left:454.36px;top:705.97px;font-family:'Liberation Mono',monospace;font-size:11.9px;color:#6e7681;font-weight:normal;letter-spacing:-0.721px;">44</div><div class="t" style="left:491.25px;top:706.97px;font-family:'Liberation Mono',monospace;font-size:11.4px;color:#cccccc;font-weight:normal;letter-spacing:-0.421px;">        When i pay by card</div><div class="t" style="left:446.50px;top:0.90px;font-family:'Liberation Sans',sans-serif;font-size:12.15px;color:#a9a9a9;font-weight:normal;">cucumber</div><svg class="s" style="left:500.00px;top:0.00px" width="80" height="18" viewBox="0 0 80 18"><path d="M5.4 3.6 L9.6 7.6 L5.4 11.6" fill="none" stroke="#a9a9a9" stroke-width="1.1"/><path d="M64 3.6 L68.2 7.6 L64 11.6" fill="none" stroke="#a9a9a9" stroke-width="1.1"/></svg><div class="t" style="left:514.75px;top:0.90px;font-family:'Liberation Sans',sans-serif;font-size:12.15px;color:#a9a9a9;font-weight:normal;">features</div><svg class="s" style="left:570.00px;top:0.00px" width="20" height="18" viewBox="0 0 20 18"><circle cx="10.3" cy="6.9" r="5.6" fill="#4cc452"/><path d="M7.700000000000001 11.100000000000001 L9.100000000000001 13.8 Q9.700000000000001 14.100000000000001 10.5 13.3 L12.100000000000001 11.8 Z" fill="#4cc452"/><circle cx="9.20" cy="4.40" r="0.62" fill="#17301a"/><circle cx="11.40" cy="4.40" r="0.62" fill="#17301a"/><circle cx="7.50" cy="5.65" r="0.62" fill="#17301a"/><circle cx="7.50" cy="7.50" r="0.62" fill="#17301a"/><circle cx="9.20" cy="9.30" r="0.62" fill="#17301a"/><circle cx="11.40" cy="9.40" r="0.62" fill="#17301a"/><circle cx="12.70" cy="7.50" r="0.62" fill="#17301a"/></svg><div class="t" style="left:592.80px;top:0.90px;font-family:'Liberation Sans',sans-serif;font-size:12.15px;color:#a9a9a9;font-weight:normal;">money_Interactions.feature</div><div class="r" style="left:1179.50px;top:17.60px;width:88.00px;height:698.00px;background:#1f1f1f;box-shadow:-3px 0 4px -2px #000"></div><div class="r" style="left:1179.50px;top:17.80px;width:100.50px;height:1.20px;background:#555555;"></div><svg class="s" style="left:1179.50px;top:17.60px" width="88" height="120" viewBox="0 0 88 120"><rect x="3.50" y="0.30" width="5.88" height="1.0" fill="#a0a0a0" fill-opacity="0.5"/><rect x="10.12" y="0.30" width="3.67" height="1.0" fill="#a0a0a0" fill-opacity="0.5"/><rect x="14.53" y="0.30" width="8.08" height="1.0" fill="#a0a0a0" fill-opacity="0.5"/><rect x="6.44" y="1.77" width="1.47" height="1.0" fill="#a0a0a0" fill-opacity="0.5"/><rect x="8.64" y="1.77" width="0.73" height="1.0" fill="#a0a0a0" fill-opacity="0.5"/><rect x="10.12" y="1.77" width="4.41" height="1.0" fill="#a0a0a0" fill-opacity="0.5"/><rect x="15.26" y="1.77" width="3.67" height="1.0" fill="#a0a0a0" fill-opacity="0.5"/><rect x="6.44" y="3.24" width="0.73" height="1.0" fill="#a0a0a0" fill-opacity="0.5"/><rect x="7.91" y="3.24" width="2.94" height="1.0" fill="#a0a0a0" fill-opacity="0.5"/><rect x="11.59" y="3.24" width="1.47" height="1.0" fill="#a0a0a0" fill-opacity="0.5"/><rect x="13.79" y="3.24" width="1.47" height="1.0" fill="#a0a0a0" fill-opacity="0.5"/><rect x="15.99" y="3.24" width="2.94" height="1.0" fill="#a0a0a0" fill-opacity="0.5"/><rect x="19.67" y="3.24" width="1.47" height="1.0" fill="#a0a0a0" fill-opacity="0.5"/><rect x="21.88" y="3.24" width="5.14" height="1.0" fill="#a0a0a0" fill-opacity="0.5"/><rect x="27.76" y="3.24" width="2.21" height="1.0" fill="#a0a0a0" fill-opacity="0.5"/><rect x="30.69" y="3.24" width="3.67" height="1.0" fill="#a0a0a0" fill-opacity="0.5"/><rect x="35.11" y="3.24" width="0.73" height="1.0" fill="#a0a0a0" fill-opacity="0.5"/><rect x="36.58" y="3.24" width="5.88" height="1.0" fill="#a0a0a0" fill-opacity="0.5"/><rect x="43.19" y="3.24" width="2.94" height="1.0" fill="#a0a0a0" fill-opacity="0.5"/><rect x="46.87" y="3.24" width="0.73" height="1.0" fill="#a0a0a0" fill-opacity="0.5"/><rect x="48.34" y="3.24" width="3.67" height="1.0" fill="#a0a0a0" fill-opacity="0.5"/><rect x="52.74" y="3.24" width="2.21" height="1.0" fill="#a0a0a0" fill-opacity="0.5"/><rect x="55.68" y="3.24" width="4.41" height="1.0" fill="#a0a0a0" fill-opacity="0.5"/><rect x="60.83" y="3.24" width="4.41" height="1.0" fill="#a0a0a0" fill-opacity="0.5"/><rect x="65.97" y="3.24" width="2.21" height="1.0" fill="#a0a0a0" fill-opacity="0.5"/><rect x="68.91" y="3.24" width="2.21" height="1.0" fill="#a0a0a0" fill-opacity="0.5"/><rect x="71.86" y="3.24" width="5.14" height="1.0" fill="#a0a0a0" fill-opacity="0.5"/><rect x="77.73" y="3.24" width="1.47" height="1.0" fill="#a0a0a0" fill-opacity="0.5"/><rect x="79.94" y="3.24" width="2.21" height="1.0" fill="#a0a0a0" fill-opacity="0.5"/><rect x="6.44" y="4.71" width="5.14" height="1.0" fill="#a0a0a0" fill-opacity="0.5"/><rect x="12.32" y="4.71" width="0.73" height="1.0" fill="#a0a0a0" fill-opacity="0.5"/><rect x="13.79" y="4.71" width="5.14" height="1.0" fill="#a0a0a0" fill-opacity="0.5"/><rect x="19.67" y="4.71" width="1.47" height="1.0" fill="#a0a0a0" fill-opacity="0.5"/><rect x="21.88" y="4.71" width="2.94" height="1.0" fill="#a0a0a0" fill-opacity="0.5"/><rect x="6.44" y="7.65" width="8.08" height="1.0" fill="#a0a0a0" fill-opacity="0.5"/><rect x="9.38" y="9.12" width="3.67" height="1.0" fill="#a0a0a0" fill-opacity="0.5"/><rect x="13.79" y="9.12" width="2.94" height="1.0" fill="#a0a0a0" fill-opacity="0.5"/><rect x="17.46" y="9.12" width="2.21" height="1.0" fill="#a0a0a0" fill-opacity="0.5"/><rect x="20.40" y="9.12" width="5.14" height="1.0" fill="#a0a0a0" fill-opacity="0.5"/><rect x="26.29" y="9.12" width="1.47" height="1.0" fill="#a0a0a0" fill-opacity="0.5"/><rect x="28.49" y="9.12" width="5.14" height="1.0" fill="#a0a0a0" fill-opacity="0.5"/><rect x="34.37" y="9.12" width="1.47" height="1.0" fill="#a0a0a0" fill-opacity="0.5"/><rect x="6.44" y="12.06" width="5.88" height="1.0" fill="#a0a0a0" fill-opacity="0.5"/><rect x="13.06" y="12.06" width="5.88" height="1.0" fill="#a0a0a0" fill-opacity="0.5"/><rect x="19.67" y="12.06" width="2.21" height="1.0" fill="#a0a0a0" fill-opacity="0.5"/><rect x="22.61" y="12.06" width="2.94" height="1.0" fill="#a0a0a0" fill-opacity="0.5"/><rect x="26.29" y="12.06" width="5.14" height="1.0" fill="#a0a0a0" fill-opacity="0.5"/><rect x="32.16" y="12.06" width="0.73" height="1.0" fill="#a0a0a0" fill-opacity="0.5"/><rect x="33.63" y="12.06" width="2.21" height="1.0" fill="#a0a0a0" fill-opacity="0.5"/><rect x="36.58" y="12.06" width="1.47" height="1.0" fill="#a0a0a0" fill-opacity="0.5"/><rect x="38.78" y="12.06" width="6.62" height="1.0" fill="#a0a0a0" fill-opacity="0.5"/><rect x="46.13" y="12.06" width="3.67" height="1.0" fill="#a0a0a0" fill-opacity="0.5"/><rect x="50.54" y="12.06" width="2.21" height="1.0" fill="#a0a0a0" fill-opacity="0.5"/><rect x="53.48" y="12.06" width="3.67" height="1.0" fill="#a0a0a0" fill-opacity="0.5"/><rect x="57.89" y="12.06" width="2.21" height="1.0" fill="#a0a0a0" fill-opacity="0.5"/><rect x="60.83" y="12.06" width="5.14" height="1.0" fill="#a0a0a0" fill-opacity="0.5"/><rect x="66.71" y="12.06" width="4.41" height="1.0" fill="#a0a0a0" fill-opacity="0.5"/><rect x="9.38" y="13.53" width="2.94" height="1.0" fill="#a0a0a0" fill-opacity="0.5"/><rect x="13.06" y="13.53" width="0.73" height="1.0" fill="#a0a0a0" fill-opacity="0.5"/><rect x="14.53" y="13.53" width="2.94" height="1.0" fill="#a0a0a0" fill-opacity="0.5"/><rect x="18.20" y="13.53" width="5.88" height="1.0" fill="#a0a0a0" fill-opacity="0.5"/><rect x="24.82" y="13.53" width="0.73" height="1.0" fill="#a0a0a0" fill-opacity="0.5"/><rect x="26.29" y="13.53" width="5.14" height="1.0" fill="#a0a0a0" fill-opacity="0.5"/><rect x="32.16" y="13.53" width="2.94" height="1.0" fill="#a0a0a0" fill-opacity="0.5"/><rect x="9.38" y="15.00" width="2.21" height="1.0" fill="#a0a0a0" fill-opacity="0.5"/><rect x="12.32" y="15.00" width="0.73" height="1.0" fill="#a0a0a0" fill-opacity="0.5"/><rect x="13.79" y="15.00" width="5.14" height="1.0" fill="#a0a0a0" fill-opacity="0.5"/><rect x="19.67" y="15.00" width="2.94" height="1.0" fill="#a0a0a0" fill-opacity="0.5"/><rect x="9.38" y="16.47" width="2.21" height="1.0" fill="#a0a0a0" fill-opacity="0.5"/><rect x="12.32" y="16.47" width="0.73" height="1.0" fill="#a0a0a0" fill-opacity="0.5"/><rect x="13.79" y="16.47" width="5.14" height="1.0" fill="#a0a0a0" fill-opacity="0.5"/><rect x="19.67" y="16.47" width="2.94" height="1.0" fill="#a0a0a0" fill-opacity="0.5"/><rect x="9.38" y="17.94" width="2.21" height="1.0" fill="#a0a0a0" fill-opacity="0.5"/><rect x="12.32" y="17.94" width="0.73" height="1.0" fill="#a0a0a0" fill-opacity="0.5"/><rect x="13.79" y="17.94" width="5.14" height="1.0" fill="#a0a0a0" fill-opacity="0.5"/><rect x="19.67" y="17.94" width="2.94" height="1.0" fill="#a0a0a0" fill-opacity="0.5"/><rect x="9.38" y="19.41" width="2.21" height="1.0" fill="#a0a0a0" fill-opacity="0.5"/><rect x="12.32" y="19.41" width="0.73" height="1.0" fill="#a0a0a0" fill-opacity="0.5"/><rect x="13.79" y="19.41" width="5.14" height="1.0" fill="#a0a0a0" fill-opacity="0.5"/><rect x="19.67" y="19.41" width="2.94" height="1.0" fill="#a0a0a0" fill-opacity="0.5"/><rect x="9.38" y="20.88" width="2.21" height="1.0" fill="#a0a0a0" fill-opacity="0.5"/><rect x="12.32" y="20.88" width="0.73" height="1.0" fill="#a0a0a0" fill-opacity="0.5"/><rect x="13.79" y="20.88" width="5.14" height="1.0" fill="#a0a0a0" fill-opacity="0.5"/><rect x="19.67" y="20.88" width="2.94" height="1.0" fill="#a0a0a0" fill-opacity="0.5"/><rect x="9.38" y="22.35" width="2.21" height="1.0" fill="#a0a0a0" fill-opacity="0.5"/><rect x="12.32" y="22.35" width="0.73" height="1.0" fill="#a0a0a0" fill-opacity="0.5"/><rect x="13.79" y="22.35" width="5.14" height="1.0" fill="#a0a0a0" fill-opacity="0.5"/><rect x="19.67" y="22.35" width="2.94" height="1.0" fill="#a0a0a0" fill-opacity="0.5"/><rect x="9.38" y="23.82" width="2.21" height="1.0" fill="#a0a0a0" fill-opacity="0.5"/><rect x="12.32" y="23.82" width="0.73" height="1.0" fill="#a0a0a0" fill-opacity="0.5"/><rect x="13.79" y="23.82" width="3.67" height="1.0" fill="#a0a0a0" fill-opacity="0.5"/><rect x="18.20" y="23.82" width="2.21" height="1.0" fill="#a0a0a0" fill-opacity="0.5"/><rect x="21.14" y="23.82" width="8.08" height="1.0" fill="#a0a0a0" fill-opacity="0.5"/><rect x="9.38" y="25.29" width="2.94" height="1.0" fill="#a0a0a0" fill-opacity="0.5"/><rect x="13.06" y="25.29" width="0.73" height="1.0" fill="#a0a0a0" fill-opacity="0.5"/><rect x="14.53" y="25.29" width="4.41" height="1.0" fill="#a0a0a0" fill-opacity="0.5"/><rect x="19.67" y="25.29" width="5.14" height="1.0" fill="#a0a0a0" fill-opacity="0.5"/><rect x="25.55" y="25.29" width="7.35" height="1.0" fill="#a0a0a0" fill-opacity="0.5"/><rect x="33.63" y="25.29" width="1.47" height="1.0" fill="#a0a0a0" fill-opacity="0.5"/><rect x="35.84" y="25.29" width="3.67" height="1.0" fill="#a0a0a0" fill-opacity="0.5"/><rect x="40.25" y="25.29" width="2.94" height="1.0" fill="#a0a0a0" fill-opacity="0.5"/><rect x="9.38" y="28.23" width="6.62" height="1.0" fill="#a0a0a0" fill-opacity="0.5"/><rect x="12.32" y="29.70" width="0.73" height="1.0" fill="#a0a0a0" fill-opacity="0.5"/><rect x="13.79" y="29.70" width="3.67" height="1.0" fill="#a0a0a0" fill-opacity="0.5"/><rect x="18.20" y="29.70" width="0.73" height="1.0" fill="#a0a0a0" fill-opacity="0.5"/><rect x="19.67" y="29.70" width="3.67" height="1.0" fill="#a0a0a0" fill-opacity="0.5"/><rect x="24.08" y="29.70" width="0.73" height="1.0" fill="#a0a0a0" fill-opacity="0.5"/><rect x="25.55" y="29.70" width="3.67" height="1.0" fill="#a0a0a0" fill-opacity="0.5"/><rect x="29.96" y="29.70" width="0.73" height="1.0" fill="#a0a0a0" fill-opacity="0.5"/><rect x="31.43" y="29.70" width="3.67" height="1.0" fill="#a0a0a0" fill-opacity="0.5"/><rect x="35.84" y="29.70" width="0.73" height="1.0" fill="#a0a0a0" fill-opacity="0.5"/><rect x="37.31" y="29.70" width="3.67" height="1.0" fill="#a0a0a0" fill-opacity="0.5"/><rect x="41.72" y="29.70" width="0.73" height="1.0" fill="#a0a0a0" fill-opacity="0.5"/><rect x="43.19" y="29.70" width="3.67" height="1.0" fill="#a0a0a0" fill-opacity="0.5"/><rect x="47.60" y="29.70" width="0.73" height="1.0" fill="#a0a0a0" fill-opacity="0.5"/><rect x="49.07" y="29.70" width="3.67" height="1.0" fill="#a0a0a0" fill-opacity="0.5"/><rect x="53.48" y="29.70" width="0.73" height="1.0" fill="#a0a0a0" fill-opacity="0.5"/><rect x="54.95" y="29.70" width="4.41" height="1.0" fill="#a0a0a0" fill-opacity="0.5"/><rect x="60.10" y="29.70" width="0.73" height="1.0" fill="#a0a0a0" fill-opacity="0.5"/><rect x="12.32" y="31.17" width="0.73" height="1.0" fill="#a0a0a0" fill-opacity="0.5"/><rect x="13.79" y="31.17" width="1.47" height="1.0" fill="#a0a0a0" fill-opacity="0.5"/><rect x="18.20" y="31.17" width="0.73" height="1.0" fill="#a0a0a0" fill-opacity="0.5"/><rect x="19.67" y="31.17" width="0.73" height="1.0" fill="#a0a0a0" fill-opacity="0.5"/><rect x="24.08" y="31.17" width="0.73" height="1.0" fill="#a0a0a0" fill-opacity="0.5"/><rect x="25.55" y="31.17" width="0.73" height="1.0" fill="#a0a0a0" fill-opacity="0.5"/><rect x="29.96" y="31.17" width="0.73" height="1.0" fill="#a0a0a0" fill-opacity="0.5"/><rect x="31.43" y="31.17" width="0.73" height="1.0" fill="#a0a0a0" fill-opacity="0.5"/><rect x="35.84" y="31.17" width="0.73" height="1.0" fill="#a0a0a0" fill-opacity="0.5"/><rect x="37.31" y="31.17" width="0.73" height="1.0" fill="#a0a0a0" fill-opacity="0.5"/><rect x="41.72" y="31.17" width="0.73" height="1.0" fill="#a0a0a0" fill-opacity="0.5"/><rect x="43.19" y="31.17" width="0.73" height="1.0" fill="#a0a0a0" fill-opacity="0.5"/><rect x="47.60" y="31.17" width="0.73" height="1.0" fill="#a0a0a0" fill-opacity="0.5"/><rect x="49.07" y="31.17" width="0.73" height="1.0" fill="#a0a0a0" fill-opacity="0.5"/><rect x="53.48" y="31.17" width="0.73" height="1.0" fill="#a0a0a0" fill-opacity="0.5"/><rect x="54.95" y="31.17" width="0.73" height="1.0" fill="#a0a0a0" fill-opacity="0.5"/><rect x="60.10" y="31.17" width="0.73" height="1.0" fill="#a0a0a0" fill-opacity="0.5"/><rect x="12.32" y="32.64" width="0.73" height="1.0" fill="#a0a0a0" fill-opacity="0.5"/><rect x="13.79" y="32.64" width="0.73" height="1.0" fill="#a0a0a0" fill-opacity="0.5"/><rect x="18.20" y="32.64" width="0.73" height="1.0" fill="#a0a0a0" fill-opacity="0.5"/><rect x="19.67" y="32.64" width="0.73" height="1.0" fill="#a0a0a0" fill-opacity="0.5"/><rect x="24.08" y="32.64" width="0.73" height="1.0" fill="#a0a0a0" fill-opacity="0.5"/><rect x="25.55" y="32.64" width="0.73" height="1.0" fill="#a0a0a0" fill-opacity="0.5"/><rect x="29.96" y="32.64" width="0.73" height="1.0" fill="#a0a0a0" fill-opacity="0.5"/><rect x="31.43" y="32.64" width="0.73" height="1.0" fill="#a0a0a0" fill-opacity="0.5"/><rect x="35.84" y="32.64" width="0.73" height="1.0" fill="#a0a0a0" fill-opacity="0.5"/><rect x="37.31" y="32.64" width="0.73" height="1.0" fill="#a0a0a0" fill-opacity="0.5"/><rect x="41.72" y="32.64" width="0.73" height="1.0" fill="#a0a0a0" fill-opacity="0.5"/><rect x="43.19" y="32.64" width="0.73" height="1.0" fill="#a0a0a0" fill-opacity="0.5"/><rect x="47.60" y="32.64" width="0.73" height="1.0" fill="#a0a0a0" fill-opacity="0.5"/><rect x="49.07" y="32.64" width="0.73" height="1.0" fill="#a0a0a0" fill-opacity="0.5"/><rect x="53.48" y="32.64" width="0.73" height="1.0" fill="#a0a0a0" fill-opacity="0.5"/><rect x="54.95" y="32.64" width="0.73" height="1.0" fill="#a0a0a0" fill-opacity="0.5"/><rect x="60.10" y="32.64" width="0.73" height="1.0" fill="#a0a0a0" fill-opacity="0.5"/><rect x="12.32" y="34.11" width="0.73" height="1.0" fill="#a0a0a0" fill-opacity="0.5"/><rect x="13.79" y="34.11" width="0.73" height="1.0" fill="#a0a0a0" fill-opacity="0.5"/><rect x="18.20" y="34.11" width="0.73" height="1.0" fill="#a0a0a0" fill-opacity="0.5"/><rect x="19.67" y="34.11" width="0.73" height="1.0" fill="#a0a0a0" fill-opacity="0.5"/><rect x="24.08" y="34.11" width="0.73" height="1.0" fill="#a0a0a0" fill-opacity="0.5"/><rect x="25.55" y="34.11" width="0.73" height="1.0" fill="#a0a0a0" fill-opacity="0.5"/><rect x="29.96" y="34.11" width="0.73" height="1.0" fill="#a0a0a0" fill-opacity="0.5"/><rect x="31.43" y="34.11" width="0.73" height="1.0" fill="#a0a0a0" fill-opacity="0.5"/><rect x="35.84" y="34.11" width="0.73" height="1.0" fill="#a0a0a0" fill-opacity="0.5"/><rect x="37.31" y="34.11" width="0.73" height="1.0" fill="#a0a0a0" fill-opacity="0.5"/><rect x="41.72" y="34.11" width="0.73" height="1.0" fill="#a0a0a0" fill-opacity="0.5"/><rect x="43.19" y="34.11" width="0.73" height="1.0" fill="#a0a0a0" fill-opacity="0.5"/><rect x="47.60" y="34.11" width="0.73" height="1.0" fill="#a0a0a0" fill-opacity="0.5"/><rect x="49.07" y="34.11" width="0.73" height="1.0" fill="#a0a0a0" fill-opacity="0.5"/><rect x="53.48" y="34.11" width="0.73" height="1.0" fill="#a0a0a0" fill-opacity="0.5"/><rect x="54.95" y="34.11" width="0.73" height="1.0" fill="#a0a0a0" fill-opacity="0.5"/><rect x="60.10" y="34.11" width="0.73" height="1.0" fill="#a0a0a0" fill-opacity="0.5"/><rect x="12.32" y="35.58" width="0.73" height="1.0" fill="#a0a0a0" fill-opacity="0.5"/><rect x="13.79" y="35.58" width="1.47" height="1.0" fill="#a0a0a0" fill-opacity="0.5"/><rect x="18.20" y="35.58" width="0.73" height="1.0" fill="#a0a0a0" fill-opacity="0.5"/><rect x="19.67" y="35.58" width="0.73" height="1.0" fill="#a0a0a0" fill-opacity="0.5"/><rect x="24.08" y="35.58" width="0.73" height="1.0" fill="#a0a0a0" fill-opacity="0.5"/><rect x="25.55" y="35.58" width="0.73" height="1.0" fill="#a0a0a0" fill-opacity="0.5"/><rect x="29.96" y="35.58" width="0.73" height="1.0" fill="#a0a0a0" fill-opacity="0.5"/><rect x="31.43" y="35.58" width="0.73" height="1.0" fill="#a0a0a0" fill-opacity="0.5"/><rect x="35.84" y="35.58" width="0.73" height="1.0" fill="#a0a0a0" fill-opacity="0.5"/><rect x="37.31" y="35.58" width="0.73" height="1.0" fill="#a0a0a0" fill-opacity="0.5"/><rect x="41.72" y="35.58" width="0.73" height="1.0" fill="#a0a0a0" fill-opacity="0.5"/><rect x="43.19" y="35.58" width="0.73" height="1.0" fill="#a0a0a0" fill-opacity="0.5"/><rect x="47.60" y="35.58" width="0.73" height="1.0" fill="#a0a0a0" fill-opacity="0.5"/><rect x="49.07" y="35.58" width="0.73" height="1.0" fill="#a0a0a0" fill-opacity="0.5"/><rect x="53.48" y="35.58" width="0.73" height="1.0" fill="#a0a0a0" fill-opacity="0.5"/><rect x="54.95" y="35.58" width="1.47" height="1.0" fill="#a0a0a0" fill-opacity="0.5"/><rect x="60.10" y="35.58" width="0.73" height="1.0" fill="#a0a0a0" fill-opacity="0.5"/><rect x="6.44" y="38.52" width="6.62" height="1.0" fill="#a0a0a0" fill-opacity="0.5"/><rect x="13.79" y="38.52" width="2.21" height="1.0" fill="#a0a0a0" fill-opacity="0.5"/><rect x="16.73" y="38.52" width="2.94" height="1.0" fill="#a0a0a0" fill-opacity="0.5"/><rect x="20.40" y="38.52" width="5.14" height="1.0" fill="#a0a0a0" fill-opacity="0.5"/><rect x="26.29" y="38.52" width="6.62" height="1.0" fill="#a0a0a0" fill-opacity="0.5"/><rect x="33.63" y="38.52" width="2.94" height="1.0" fill="#a0a0a0" fill-opacity="0.5"/><rect x="37.31" y="38.52" width="1.47" height="1.0" fill="#a0a0a0" fill-opacity="0.5"/><rect x="39.52" y="38.52" width="2.21" height="1.0" fill="#a0a0a0" fill-opacity="0.5"/><rect x="42.45" y="38.52" width="0.73" height="1.0" fill="#a0a0a0" fill-opacity="0.5"/><rect x="43.92" y="38.52" width="3.67" height="1.0" fill="#a0a0a0" fill-opacity="0.5"/><rect x="48.34" y="38.52" width="2.94" height="1.0" fill="#a0a0a0" fill-opacity="0.5"/><rect x="52.01" y="38.52" width="2.94" height="1.0" fill="#a0a0a0" fill-opacity="0.5"/><rect x="55.68" y="38.52" width="2.21" height="1.0" fill="#a0a0a0" fill-opacity="0.5"/><rect x="58.62" y="38.52" width="7.35" height="1.0" fill="#a0a0a0" fill-opacity="0.5"/><rect x="9.38" y="39.99" width="2.94" height="1.0" fill="#a0a0a0" fill-opacity="0.5"/><rect x="13.06" y="39.99" width="0.73" height="1.0" fill="#a0a0a0" fill-opacity="0.5"/><rect x="14.53" y="39.99" width="4.41" height="1.0" fill="#a0a0a0" fill-opacity="0.5"/><rect x="19.67" y="39.99" width="6.62" height="1.0" fill="#a0a0a0" fill-opacity="0.5"/><rect x="27.02" y="39.99" width="2.94" height="1.0" fill="#a0a0a0" fill-opacity="0.5"/><rect x="30.69" y="39.99" width="1.47" height="1.0" fill="#a0a0a0" fill-opacity="0.5"/><rect x="32.90" y="39.99" width="2.21" height="1.0" fill="#a0a0a0" fill-opacity="0.5"/><rect x="35.84" y="39.99" width="0.73" height="1.0" fill="#a0a0a0" fill-opacity="0.5"/><rect x="37.31" y="39.99" width="3.67" height="1.0" fill="#a0a0a0" fill-opacity="0.5"/><rect x="41.72" y="39.99" width="2.94" height="1.0" fill="#a0a0a0" fill-opacity="0.5"/><rect x="45.39" y="39.99" width="2.94" height="1.0" fill="#a0a0a0" fill-opacity="0.5"/><rect x="49.07" y="39.99" width="2.21" height="1.0" fill="#a0a0a0" fill-opacity="0.5"/><rect x="52.01" y="39.99" width="7.35" height="1.0" fill="#a0a0a0" fill-opacity="0.5"/><rect x="9.38" y="41.46" width="2.94" height="1.0" fill="#a0a0a0" fill-opacity="0.5"/><rect x="13.06" y="41.46" width="0.73" height="1.0" fill="#a0a0a0" fill-opacity="0.5"/><rect x="14.53" y="41.46" width="4.41" height="1.0" fill="#a0a0a0" fill-opacity="0.5"/><rect x="19.67" y="41.46" width="2.21" height="1.0" fill="#a0a0a0" fill-opacity="0.5"/><rect x="22.61" y="41.46" width="1.47" height="1.0" fill="#a0a0a0" fill-opacity="0.5"/><rect x="24.82" y="41.46" width="3.67" height="1.0" fill="#a0a0a0" fill-opacity="0.5"/><rect x="29.22" y="41.46" width="5.14" height="1.0" fill="#a0a0a0" fill-opacity="0.5"/><rect x="6.44" y="44.40" width="5.88" height="1.0" fill="#a0a0a0" fill-opacity="0.5"/><rect x="13.06" y="44.40" width="5.88" height="1.0" fill="#a0a0a0" fill-opacity="0.5"/><rect x="19.67" y="44.40" width="2.21" height="1.0" fill="#a0a0a0" fill-opacity="0.5"/><rect x="22.61" y="44.40" width="2.94" height="1.0" fill="#a0a0a0" fill-opacity="0.5"/><rect x="26.29" y="44.40" width="2.94" height="1.0" fill="#a0a0a0" fill-opacity="0.5"/><rect x="29.96" y="44.40" width="1.47" height="1.0" fill="#a0a0a0" fill-opacity="0.5"/><rect x="32.16" y="44.40" width="0.73" height="1.0" fill="#a0a0a0" fill-opacity="0.5"/><rect x="33.63" y="44.40" width="3.67" height="1.0" fill="#a0a0a0" fill-opacity="0.5"/><rect x="38.05" y="44.40" width="2.21" height="1.0" fill="#a0a0a0" fill-opacity="0.5"/><rect x="40.98" y="44.40" width="2.94" height="1.0" fill="#a0a0a0" fill-opacity="0.5"/><rect x="44.66" y="44.40" width="2.94" height="1.0" fill="#a0a0a0" fill-opacity="0.5"/><rect x="48.34" y="44.40" width="1.47" height="1.0" fill="#a0a0a0" fill-opacity="0.5"/><rect x="50.54" y="44.40" width="2.94" height="1.0" fill="#a0a0a0" fill-opacity="0.5"/><rect x="9.38" y="45.87" width="2.94" height="1.0" fill="#a0a0a0" fill-opacity="0.5"/><rect x="13.06" y="45.87" width="0.73" height="1.0" fill="#a0a0a0" fill-opacity="0.5"/><rect x="14.53" y="45.87" width="4.41" height="1.0" fill="#a0a0a0" fill-opacity="0.5"/><rect x="19.67" y="45.87" width="0.73" height="1.0" fill="#a0a0a0" fill-opacity="0.5"/><rect x="21.14" y="45.87" width="5.88" height="1.0" fill="#a0a0a0" fill-opacity="0.5"/><rect x="27.76" y="45.87" width="2.94" height="1.0" fill="#a0a0a0" fill-opacity="0.5"/><rect x="9.38" y="47.34" width="2.21" height="1.0" fill="#a0a0a0" fill-opacity="0.5"/><rect x="12.32" y="47.34" width="0.73" height="1.0" fill="#a0a0a0" fill-opacity="0.5"/><rect x="13.79" y="47.34" width="2.21" height="1.0" fill="#a0a0a0" fill-opacity="0.5"/><rect x="16.73" y="47.34" width="10.29" height="1.0" fill="#a0a0a0" fill-opacity="0.5"/><rect x="27.76" y="47.34" width="2.94" height="1.0" fill="#a0a0a0" fill-opacity="0.5"/><rect x="31.43" y="47.34" width="2.94" height="1.0" fill="#a0a0a0" fill-opacity="0.5"/><rect x="9.38" y="48.81" width="2.21" height="1.0" fill="#a0a0a0" fill-opacity="0.5"/><rect x="12.32" y="48.81" width="0.73" height="1.0" fill="#a0a0a0" fill-opacity="0.5"/><rect x="13.79" y="48.81" width="3.67" height="1.0" fill="#a0a0a0" fill-opacity="0.5"/><rect x="18.20" y="48.81" width="2.21" height="1.0" fill="#a0a0a0" fill-opacity="0.5"/><rect x="21.14" y="48.81" width="8.08" height="1.0" fill="#a0a0a0" fill-opacity="0.5"/><rect x="9.38" y="50.28" width="2.94" height="1.0" fill="#a0a0a0" fill-opacity="0.5"/><rect x="13.06" y="50.28" width="0.73" height="1.0" fill="#a0a0a0" fill-opacity="0.5"/><rect x="14.53" y="50.28" width="4.41" height="1.0" fill="#a0a0a0" fill-opacity="0.5"/><rect x="19.67" y="50.28" width="5.14" height="1.0" fill="#a0a0a0" fill-opacity="0.5"/><rect x="25.55" y="50.28" width="7.35" height="1.0" fill="#a0a0a0" fill-opacity="0.5"/><rect x="33.63" y="50.28" width="1.47" height="1.0" fill="#a0a0a0" fill-opacity="0.5"/><rect x="35.84" y="50.28" width="4.41" height="1.0" fill="#a0a0a0" fill-opacity="0.5"/><rect x="9.38" y="53.22" width="6.62" height="1.0" fill="#a0a0a0" fill-opacity="0.5"/><rect x="12.32" y="54.69" width="0.73" height="1.0" fill="#a0a0a0" fill-opacity="0.5"/><rect x="13.79" y="54.69" width="2.94" height="1.0" fill="#a0a0a0" fill-opacity="0.5"/><rect x="17.46" y="54.69" width="0.73" height="1.0" fill="#a0a0a0" fill-opacity="0.5"/><rect x="18.93" y="54.69" width="7.35" height="1.0" fill="#a0a0a0" fill-opacity="0.5"/><rect x="27.02" y="54.69" width="0.73" height="1.0" fill="#a0a0a0" fill-opacity="0.5"/><rect x="28.49" y="54.69" width="4.41" height="1.0" fill="#a0a0a0" fill-opacity="0.5"/><rect x="33.63" y="54.69" width="0.73" height="1.0" fill="#a0a0a0" fill-opacity="0.5"/><rect x="12.32" y="56.16" width="0.73" height="1.0" fill="#a0a0a0" fill-opacity="0.5"/><rect x="13.79" y="56.16" width="0.73" height="1.0" fill="#a0a0a0" fill-opacity="0.5"/><rect x="17.46" y="56.16" width="0.73" height="1.0" fill="#a0a0a0" fill-opacity="0.5"/><rect x="18.93" y="56.16" width="1.47" height="1.0" fill="#a0a0a0" fill-opacity="0.5"/><rect x="27.02" y="56.16" width="0.73" height="1.0" fill="#a0a0a0" fill-opacity="0.5"/><rect x="28.49" y="56.16" width="0.73" height="1.0" fill="#a0a0a0" fill-opacity="0.5"/><rect x="33.63" y="56.16" width="0.73" height="1.0" fill="#a0a0a0" fill-opacity="0.5"/><rect x="12.32" y="57.63" width="0.73" height="1.0" fill="#a0a0a0" fill-opacity="0.5"/><rect x="13.79" y="57.63" width="0.73" height="1.0" fill="#a0a0a0" fill-opacity="0.5"/><rect x="17.46" y="57.63" width="0.73" height="1.0" fill="#a0a0a0" fill-opacity="0.5"/><rect x="18.93" y="57.63" width="1.47" height="1.0" fill="#a0a0a0" fill-opacity="0.5"/><rect x="27.02" y="57.63" width="0.73" height="1.0" fill="#a0a0a0" fill-opacity="0.5"/><rect x="28.49" y="57.63" width="0.73" height="1.0" fill="#a0a0a0" fill-opacity="0.5"/><rect x="33.63" y="57.63" width="0.73" height="1.0" fill="#a0a0a0" fill-opacity="0.5"/><rect x="12.32" y="59.10" width="0.73" height="1.0" fill="#a0a0a0" fill-opacity="0.5"/><rect x="13.79" y="59.10" width="0.73" height="1.0" fill="#a0a0a0" fill-opacity="0.5"/><rect x="17.46" y="59.10" width="0.73" height="1.0" fill="#a0a0a0" fill-opacity="0.5"/><rect x="18.93" y="59.10" width="1.47" height="1.0" fill="#a0a0a0" fill-opacity="0.5"/><rect x="27.02" y="59.10" width="0.73" height="1.0" fill="#a0a0a0" fill-opacity="0.5"/><rect x="28.49" y="59.10" width="0.73" height="1.0" fill="#a0a0a0" fill-opacity="0.5"/><rect x="33.63" y="59.10" width="0.73" height="1.0" fill="#a0a0a0" fill-opacity="0.5"/><rect x="6.44" y="62.04" width="6.62" height="1.0" fill="#a0a0a0" fill-opacity="0.5"/><rect x="13.79" y="62.04" width="2.21" height="1.0" fill="#a0a0a0" fill-opacity="0.5"/><rect x="16.73" y="62.04" width="2.94" height="1.0" fill="#a0a0a0" fill-opacity="0.5"/><rect x="20.40" y="62.04" width="2.94" height="1.0" fill="#a0a0a0" fill-opacity="0.5"/><rect x="24.08" y="62.04" width="2.94" height="1.0" fill="#a0a0a0" fill-opacity="0.5"/><rect x="27.76" y="62.04" width="0.73" height="1.0" fill="#a0a0a0" fill-opacity="0.5"/><rect x="29.22" y="62.04" width="2.94" height="1.0" fill="#a0a0a0" fill-opacity="0.5"/><rect x="32.90" y="62.04" width="5.14" height="1.0" fill="#a0a0a0" fill-opacity="0.5"/><rect x="38.78" y="62.04" width="4.41" height="1.0" fill="#a0a0a0" fill-opacity="0.5"/><rect x="43.92" y="62.04" width="3.67" height="1.0" fill="#a0a0a0" fill-opacity="0.5"/><rect x="48.34" y="62.04" width="1.47" height="1.0" fill="#a0a0a0" fill-opacity="0.5"/><rect x="50.54" y="62.04" width="1.47" height="1.0" fill="#a0a0a0" fill-opacity="0.5"/><rect x="9.38" y="63.51" width="2.94" height="1.0" fill="#a0a0a0" fill-opacity="0.5"/><rect x="13.06" y="63.51" width="0.73" height="1.0" fill="#a0a0a0" fill-opacity="0.5"/><rect x="14.53" y="63.51" width="2.21" height="1.0" fill="#a0a0a0" fill-opacity="0.5"/><rect x="17.46" y="63.51" width="1.47" height="1.0" fill="#a0a0a0" fill-opacity="0.5"/><rect x="19.67" y="63.51" width="2.94" height="1.0" fill="#a0a0a0" fill-opacity="0.5"/><rect x="9.38" y="64.98" width="2.21" height="1.0" fill="#a0a0a0" fill-opacity="0.5"/><rect x="12.32" y="64.98" width="0.73" height="1.0" fill="#a0a0a0" fill-opacity="0.5"/><rect x="13.79" y="64.98" width="2.94" height="1.0" fill="#a0a0a0" fill-opacity="0.5"/><rect x="17.46" y="64.98" width="1.47" height="1.0" fill="#a0a0a0" fill-opacity="0.5"/><rect x="19.67" y="64.98" width="3.67" height="1.0" fill="#a0a0a0" fill-opacity="0.5"/><rect x="24.08" y="64.98" width="1.47" height="1.0" fill="#a0a0a0" fill-opacity="0.5"/><rect x="26.29" y="64.98" width="1.47" height="1.0" fill="#a0a0a0" fill-opacity="0.5"/><rect x="9.38" y="66.45" width="2.94" height="1.0" fill="#a0a0a0" fill-opacity="0.5"/><rect x="13.06" y="66.45" width="0.73" height="1.0" fill="#a0a0a0" fill-opacity="0.5"/><rect x="14.53" y="66.45" width="4.41" height="1.0" fill="#a0a0a0" fill-opacity="0.5"/><rect x="19.67" y="66.45" width="2.21" height="1.0" fill="#a0a0a0" fill-opacity="0.5"/><rect x="22.61" y="66.45" width="1.47" height="1.0" fill="#a0a0a0" fill-opacity="0.5"/><rect x="24.82" y="66.45" width="3.67" height="1.0" fill="#a0a0a0" fill-opacity="0.5"/><rect x="29.22" y="66.45" width="5.14" height="1.0" fill="#a0a0a0" fill-opacity="0.5"/><rect x="35.11" y="66.45" width="2.94" height="1.0" fill="#a0a0a0" fill-opacity="0.5"/><rect x="38.78" y="66.45" width="2.94" height="1.0" fill="#a0a0a0" fill-opacity="0.5"/><rect x="42.45" y="66.45" width="2.21" height="1.0" fill="#a0a0a0" fill-opacity="0.5"/><rect x="45.39" y="66.45" width="4.41" height="1.0" fill="#a0a0a0" fill-opacity="0.5"/><rect x="50.54" y="66.45" width="3.67" height="1.0" fill="#a0a0a0" fill-opacity="0.5"/><rect x="6.44" y="69.39" width="6.62" height="1.0" fill="#a0a0a0" fill-opacity="0.5"/><rect x="13.79" y="69.39" width="2.21" height="1.0" fill="#a0a0a0" fill-opacity="0.5"/><rect x="16.73" y="69.39" width="2.94" height="1.0" fill="#a0a0a0" fill-opacity="0.5"/><rect x="20.40" y="69.39" width="5.14" height="1.0" fill="#a0a0a0" fill-opacity="0.5"/><rect x="26.29" y="69.39" width="2.21" height="1.0" fill="#a0a0a0" fill-opacity="0.5"/><rect x="29.22" y="69.39" width="5.88" height="1.0" fill="#a0a0a0" fill-opacity="0.5"/><rect x="35.84" y="69.39" width="2.21" height="1.0" fill="#a0a0a0" fill-opacity="0.5"/><rect x="38.78" y="69.39" width="2.94" height="1.0" fill="#a0a0a0" fill-opacity="0.5"/><rect x="42.45" y="69.39" width="2.21" height="1.0" fill="#a0a0a0" fill-opacity="0.5"/><rect x="45.39" y="69.39" width="1.47" height="1.0" fill="#a0a0a0" fill-opacity="0.5"/><rect x="47.60" y="69.39" width="2.21" height="1.0" fill="#a0a0a0" fill-opacity="0.5"/><rect x="50.54" y="69.39" width="3.67" height="1.0" fill="#a0a0a0" fill-opacity="0.5"/><rect x="54.95" y="69.39" width="2.94" height="1.0" fill="#a0a0a0" fill-opacity="0.5"/><rect x="9.38" y="70.86" width="2.94" height="1.0" fill="#a0a0a0" fill-opacity="0.5"/><rect x="13.06" y="70.86" width="0.73" height="1.0" fill="#a0a0a0" fill-opacity="0.5"/><rect x="14.53" y="70.86" width="4.41" height="1.0" fill="#a0a0a0" fill-opacity="0.5"/><rect x="19.67" y="70.86" width="0.73" height="1.0" fill="#a0a0a0" fill-opacity="0.5"/><rect x="21.14" y="70.86" width="2.94" height="1.0" fill="#a0a0a0" fill-opacity="0.5"/><rect x="9.38" y="72.33" width="2.21" height="1.0" fill="#a0a0a0" fill-opacity="0.5"/><rect x="12.32" y="72.33" width="0.73" height="1.0" fill="#a0a0a0" fill-opacity="0.5"/><rect x="13.79" y="72.33" width="3.67" height="1.0" fill="#a0a0a0" fill-opacity="0.5"/><rect x="18.20" y="72.33" width="4.41" height="1.0" fill="#a0a0a0" fill-opacity="0.5"/><rect x="23.35" y="72.33" width="4.41" height="1.0" fill="#a0a0a0" fill-opacity="0.5"/><rect x="9.38" y="73.80" width="2.94" height="1.0" fill="#a0a0a0" fill-opacity="0.5"/><rect x="13.06" y="73.80" width="0.73" height="1.0" fill="#a0a0a0" fill-opacity="0.5"/><rect x="14.53" y="73.80" width="4.41" height="1.0" fill="#a0a0a0" fill-opacity="0.5"/><rect x="19.67" y="73.80" width="5.14" height="1.0" fill="#a0a0a0" fill-opacity="0.5"/><rect x="25.55" y="73.80" width="2.21" height="1.0" fill="#a0a0a0" fill-opacity="0.5"/><rect x="28.49" y="73.80" width="3.67" height="1.0" fill="#a0a0a0" fill-opacity="0.5"/><rect x="32.90" y="73.80" width="2.94" height="1.0" fill="#a0a0a0" fill-opacity="0.5"/><rect x="36.58" y="73.80" width="0.73" height="1.0" fill="#a0a0a0" fill-opacity="0.5"/><rect x="38.05" y="73.80" width="5.88" height="1.0" fill="#a0a0a0" fill-opacity="0.5"/><rect x="44.66" y="73.80" width="1.47" height="1.0" fill="#a0a0a0" fill-opacity="0.5"/><rect x="46.87" y="73.80" width="2.21" height="1.0" fill="#a0a0a0" fill-opacity="0.5"/><rect x="49.81" y="73.80" width="5.14" height="1.0" fill="#a0a0a0" fill-opacity="0.5"/><rect x="6.44" y="76.74" width="5.88" height="1.0" fill="#a0a0a0" fill-opacity="0.5"/><rect x="13.06" y="76.74" width="5.88" height="1.0" fill="#a0a0a0" fill-opacity="0.5"/><rect x="19.67" y="76.74" width="2.21" height="1.0" fill="#a0a0a0" fill-opacity="0.5"/><rect x="22.61" y="76.74" width="2.94" height="1.0" fill="#a0a0a0" fill-opacity="0.5"/><rect x="26.29" y="76.74" width="5.14" height="1.0" fill="#a0a0a0" fill-opacity="0.5"/><rect x="32.16" y="76.74" width="0.73" height="1.0" fill="#a0a0a0" fill-opacity="0.5"/><rect x="33.63" y="76.74" width="3.67" height="1.0" fill="#a0a0a0" fill-opacity="0.5"/><rect x="38.05" y="76.74" width="2.94" height="1.0" fill="#a0a0a0" fill-opacity="0.5"/><rect x="41.72" y="76.74" width="1.47" height="1.0" fill="#a0a0a0" fill-opacity="0.5"/><rect x="43.92" y="76.74" width="2.94" height="1.0" fill="#a0a0a0" fill-opacity="0.5"/><rect x="47.60" y="76.74" width="2.21" height="1.0" fill="#a0a0a0" fill-opacity="0.5"/><rect x="50.54" y="76.74" width="2.21" height="1.0" fill="#a0a0a0" fill-opacity="0.5"/><rect x="53.48" y="76.74" width="3.67" height="1.0" fill="#a0a0a0" fill-opacity="0.5"/><rect x="57.89" y="76.74" width="2.21" height="1.0" fill="#a0a0a0" fill-opacity="0.5"/><rect x="60.83" y="76.74" width="3.67" height="1.0" fill="#a0a0a0" fill-opacity="0.5"/><rect x="65.24" y="76.74" width="2.94" height="1.0" fill="#a0a0a0" fill-opacity="0.5"/><rect x="9.38" y="78.21" width="2.94" height="1.0" fill="#a0a0a0" fill-opacity="0.5"/><rect x="13.06" y="78.21" width="0.73" height="1.0" fill="#a0a0a0" fill-opacity="0.5"/><rect x="14.53" y="78.21" width="2.94" height="1.0" fill="#a0a0a0" fill-opacity="0.5"/><rect x="18.20" y="78.21" width="5.88" height="1.0" fill="#a0a0a0" fill-opacity="0.5"/><rect x="24.82" y="78.21" width="5.88" height="1.0" fill="#a0a0a0" fill-opacity="0.5"/><rect x="31.43" y="78.21" width="3.67" height="1.0" fill="#a0a0a0" fill-opacity="0.5"/><rect x="9.38" y="79.68" width="2.21" height="1.0" fill="#a0a0a0" fill-opacity="0.5"/><rect x="12.32" y="79.68" width="0.73" height="1.0" fill="#a0a0a0" fill-opacity="0.5"/><rect x="13.79" y="79.68" width="4.41" height="1.0" fill="#a0a0a0" fill-opacity="0.5"/><rect x="18.93" y="79.68" width="0.73" height="1.0" fill="#a0a0a0" fill-opacity="0.5"/><rect x="20.40" y="79.68" width="3.67" height="1.0" fill="#a0a0a0" fill-opacity="0.5"/><rect x="24.82" y="79.68" width="2.94" height="1.0" fill="#a0a0a0" fill-opacity="0.5"/><rect x="28.49" y="79.68" width="1.47" height="1.0" fill="#a0a0a0" fill-opacity="0.5"/><rect x="30.69" y="79.68" width="2.94" height="1.0" fill="#a0a0a0" fill-opacity="0.5"/><rect x="9.38" y="81.15" width="2.21" height="1.0" fill="#a0a0a0" fill-opacity="0.5"/><rect x="12.32" y="81.15" width="0.73" height="1.0" fill="#a0a0a0" fill-opacity="0.5"/><rect x="13.79" y="81.15" width="3.67" height="1.0" fill="#a0a0a0" fill-opacity="0.5"/><rect x="18.20" y="81.15" width="8.08" height="1.0" fill="#a0a0a0" fill-opacity="0.5"/><rect x="9.38" y="82.62" width="2.94" height="1.0" fill="#a0a0a0" fill-opacity="0.5"/><rect x="13.06" y="82.62" width="0.73" height="1.0" fill="#a0a0a0" fill-opacity="0.5"/><rect x="14.53" y="82.62" width="4.41" height="1.0" fill="#a0a0a0" fill-opacity="0.5"/><rect x="19.67" y="82.62" width="2.21" height="1.0" fill="#a0a0a0" fill-opacity="0.5"/><rect x="22.61" y="82.62" width="5.88" height="1.0" fill="#a0a0a0" fill-opacity="0.5"/><rect x="29.22" y="82.62" width="2.94" height="1.0" fill="#a0a0a0" fill-opacity="0.5"/><rect x="9.38" y="85.56" width="6.62" height="1.0" fill="#a0a0a0" fill-opacity="0.5"/><rect x="12.32" y="87.03" width="0.73" height="1.0" fill="#a0a0a0" fill-opacity="0.5"/><rect x="13.79" y="87.03" width="2.94" height="1.0" fill="#a0a0a0" fill-opacity="0.5"/><rect x="17.46" y="87.03" width="0.73" height="1.0" fill="#a0a0a0" fill-opacity="0.5"/><rect x="18.93" y="87.03" width="4.41" height="1.0" fill="#a0a0a0" fill-opacity="0.5"/><rect x="24.08" y="87.03" width="0.73" height="1.0" fill="#a0a0a0" fill-opacity="0.5"/><rect x="12.32" y="88.50" width="0.73" height="1.0" fill="#a0a0a0" fill-opacity="0.5"/><rect x="13.79" y="88.50" width="0.73" height="1.0" fill="#a0a0a0" fill-opacity="0.5"/><rect x="17.46" y="88.50" width="0.73" height="1.0" fill="#a0a0a0" fill-opacity="0.5"/><rect x="18.93" y="88.50" width="0.73" height="1.0" fill="#a0a0a0" fill-opacity="0.5"/><rect x="24.08" y="88.50" width="0.73" height="1.0" fill="#a0a0a0" fill-opacity="0.5"/><rect x="12.32" y="89.97" width="0.73" height="1.0" fill="#a0a0a0" fill-opacity="0.5"/><rect x="13.79" y="89.97" width="1.47" height="1.0" fill="#a0a0a0" fill-opacity="0.5"/><rect x="17.46" y="89.97" width="0.73" height="1.0" fill="#a0a0a0" fill-opacity="0.5"/><rect x="18.93" y="89.97" width="1.47" height="1.0" fill="#a0a0a0" fill-opacity="0.5"/><rect x="24.08" y="89.97" width="0.73" height="1.0" fill="#a0a0a0" fill-opacity="0.5"/><rect x="6.44" y="92.91" width="6.62" height="1.0" fill="#a0a0a0" fill-opacity="0.5"/><rect x="13.79" y="92.91" width="2.21" height="1.0" fill="#a0a0a0" fill-opacity="0.5"/><rect x="16.73" y="92.91" width="2.94" height="1.0" fill="#a0a0a0" fill-opacity="0.5"/><rect x="20.40" y="92.91" width="5.14" height="1.0" fill="#a0a0a0" fill-opacity="0.5"/><rect x="26.29" y="92.91" width="3.67" height="1.0" fill="#a0a0a0" fill-opacity="0.5"/><rect x="30.69" y="92.91" width="5.14" height="1.0" fill="#a0a0a0" fill-opacity="0.5"/><rect x="36.58" y="92.91" width="6.62" height="1.0" fill="#a0a0a0" fill-opacity="0.5"/><rect x="43.92" y="92.91" width="2.21" height="1.0" fill="#a0a0a0" fill-opacity="0.5"/><rect x="46.87" y="92.91" width="3.67" height="1.0" fill="#a0a0a0" fill-opacity="0.5"/><rect x="9.38" y="94.38" width="2.94" height="1.0" fill="#a0a0a0" fill-opacity="0.5"/><rect x="13.06" y="94.38" width="0.73" height="1.0" fill="#a0a0a0" fill-opacity="0.5"/><rect x="14.53" y="94.38" width="3.67" height="1.0" fill="#a0a0a0" fill-opacity="0.5"/><rect x="18.93" y="94.38" width="2.21" height="1.0" fill="#a0a0a0" fill-opacity="0.5"/><rect x="21.88" y="94.38" width="8.08" height="1.0" fill="#a0a0a0" fill-opacity="0.5"/><rect x="30.69" y="94.38" width="3.67" height="1.0" fill="#a0a0a0" fill-opacity="0.5"/><rect x="9.38" y="95.85" width="2.94" height="1.0" fill="#a0a0a0" fill-opacity="0.5"/><rect x="13.06" y="95.85" width="0.73" height="1.0" fill="#a0a0a0" fill-opacity="0.5"/><rect x="14.53" y="95.85" width="4.41" height="1.0" fill="#a0a0a0" fill-opacity="0.5"/><rect x="19.67" y="95.85" width="2.21" height="1.0" fill="#a0a0a0" fill-opacity="0.5"/><rect x="22.61" y="95.85" width="0.73" height="1.0" fill="#a0a0a0" fill-opacity="0.5"/><rect x="24.08" y="95.85" width="5.14" height="1.0" fill="#a0a0a0" fill-opacity="0.5"/><rect x="29.96" y="95.85" width="1.47" height="1.0" fill="#a0a0a0" fill-opacity="0.5"/><rect x="32.16" y="95.85" width="4.41" height="1.0" fill="#a0a0a0" fill-opacity="0.5"/><rect x="9.38" y="97.32" width="2.21" height="1.0" fill="#a0a0a0" fill-opacity="0.5"/><rect x="12.32" y="97.32" width="1.47" height="1.0" fill="#a0a0a0" fill-opacity="0.5"/><rect x="14.53" y="97.32" width="3.67" height="1.0" fill="#a0a0a0" fill-opacity="0.5"/><rect x="18.93" y="97.32" width="4.41" height="1.0" fill="#a0a0a0" fill-opacity="0.5"/><rect x="24.08" y="97.32" width="1.47" height="1.0" fill="#a0a0a0" fill-opacity="0.5"/><rect x="26.29" y="97.32" width="4.41" height="1.0" fill="#a0a0a0" fill-opacity="0.5"/><rect x="9.38" y="98.79" width="2.21" height="1.0" fill="#a0a0a0" fill-opacity="0.5"/><rect x="12.32" y="98.79" width="2.21" height="1.0" fill="#a0a0a0" fill-opacity="0.5"/><rect x="15.26" y="98.79" width="5.14" height="1.0" fill="#a0a0a0" fill-opacity="0.5"/><rect x="21.14" y="98.79" width="4.41" height="1.0" fill="#a0a0a0" fill-opacity="0.5"/><rect x="26.29" y="98.79" width="1.47" height="1.0" fill="#a0a0a0" fill-opacity="0.5"/><rect x="28.49" y="98.79" width="5.14" height="1.0" fill="#a0a0a0" fill-opacity="0.5"/></svg><div class="r" style="left:1267.50px;top:17.60px;width:0.80px;height:698.00px;background:#2b2b2b;opacity:0.5"></div><div class="r" style="left:1268.00px;top:17.80px;width:12.00px;height:1.20px;background:#a0a0a0;"></div><div class="r" style="left:1271.00px;top:18.20px;width:5.00px;height:5.60px;background:#9a9a9a;"></div><div class="r" style="left:0.00px;top:715.60px;width:1280.00px;height:19.40px;background:#181818;"></div><div class="r" style="left:0.00px;top:715.30px;width:1280.00px;height:0.90px;background:#2b2b2b;"></div><div class="r" style="left:0.00px;top:715.60px;width:31.00px;height:19.40px;background:#0078d4;"></div><svg class="s" style="left:0.00px;top:0.00px" width="220" height="735" viewBox="0 0 220 735"><g fill="none" stroke="#e6eef7" stroke-width="1.15" stroke-linecap="round" stroke-linejoin="round">
<path d="M11.6 722.7 L15 725.9 L11.6 729.3"/><path d="M18.9 719.5 L15.9 722.9 L18.9 726.3"/></g>
<g fill="none" stroke="#cccccc" stroke-width="1.1" stroke-linecap="round" stroke-linejoin="round">
<circle cx="39.4" cy="720.2" r="1.7"/><circle cx="39.4" cy="729" r="1.7"/><circle cx="45" cy="722.7" r="1.7"/>
<line x1="39.4" y1="721.9" x2="39.4" y2="727.3"/><path d="M45 724.4 Q45 726.6 39.6 727"/>
<path d="M97.9 723.2 A4.7 4.7 0 0 1 106.8 723.6 M106.6 726.2 A4.7 4.7 0 0 1 97.7 725.8"/>
<path d="M105 722.4 L106.9 724.2 L108.6 722.3 M99.5 726.8 L97.6 725 L95.9 726.9"/>
<circle cx="127.3" cy="724.8" r="5.1"/><path d="M125.5 723 L129.1 726.6 M129.1 723 L125.5 726.6"/>
<path d="M152.35 720 L157.7 729.2 H147 Z"/><line x1="152.35" y1="723.4" x2="152.35" y2="726.4"/>
<path d="M189.1 722.2 L186.6 729.4 M189.1 722.2 L191.6 729.4 M187.4 727.2 H190.8"/><circle cx="189.1" cy="721.6" r="0.7"/>
<path d="M186.6 719.8 A3.2 3.2 0 0 0 186.6 724.2 M191.6 719.8 A3.2 3.2 0 0 1 191.6 724.2 M184.6 719 A5 5 0 0 0 184.6 725.2 M193.6 719 A5 5 0 0 1 193.6 725.2"/>
</g></svg><div class="t" style="left:51.50px;top:718.60px;font-family:'Liberation Sans',sans-serif;font-size:11.3px;color:#cccccc;font-weight:normal;">master*</div><div class="t" style="left:136.70px;top:718.60px;font-family:'Liberation Sans',sans-serif;font-size:11.3px;color:#cccccc;font-weight:normal;">0</div><div class="t" style="left:161.30px;top:718.60px;font-family:'Liberation Sans',sans-serif;font-size:11.3px;color:#cccccc;font-weight:normal;">0</div><div class="t" style="left:198.30px;top:718.60px;font-family:'Liberation Sans',sans-serif;font-size:11.3px;color:#cccccc;font-weight:normal;">0</div><div class="r" style="left:948.10px;top:716.20px;width:31.20px;height:18.80px;background:#363a40;"></div><svg class="s" style="left:0.00px;top:0.00px" width="1280" height="735" viewBox="0 0 1280 735"><g fill="none" stroke="#cccccc" stroke-width="1.1" stroke-linecap="round">
<circle cx="962.6" cy="723.2" r="4"/><line x1="965.5" y1="726.1" x2="969" y2="729.6"/><path d="M960.6 723.2 H964.6 M962.6 721.2 V725.2"/>
<path d="M1255.9 728.3 Q1257.1 727.3 1257.1 725.6 V723.2 A3.2 3.2 0 0 1 1263.5 723.2 V725.6 Q1263.5 727.3 1264.7 728.3 Z"/><path d="M1259.3 729 Q1260.3 730.4 1261.3 729"/>
</g></svg><div class="t" style="left:985.70px;top:718.60px;font-family:'Liberation Sans',sans-serif;font-size:11.15px;color:#cccccc;font-weight:normal;">Ln 1, Col 1</div><div class="t" style="left:1054.70px;top:718.60px;font-family:'Liberation Sans',sans-serif;font-size:11.15px;color:#cccccc;font-weight:normal;">Spaces: 4</div><div class="t" style="left:1118.50px;top:718.60px;font-family:'Liberation Sans',sans-serif;font-size:11.15px;color:#cccccc;font-weight:normal;">UTF-8</div><div class="t" style="left:1165.20px;top:718.60px;font-family:'Liberation Sans',sans-serif;font-size:11.15px;color:#cccccc;font-weight:normal;">LF</div><div class="t" style="left:1191.80px;top:718.60px;font-family:'Liberation Sans',sans-serif;font-size:11.15px;color:#cccccc;font-weight:normal;">Plain Text</div>
</body></html>
